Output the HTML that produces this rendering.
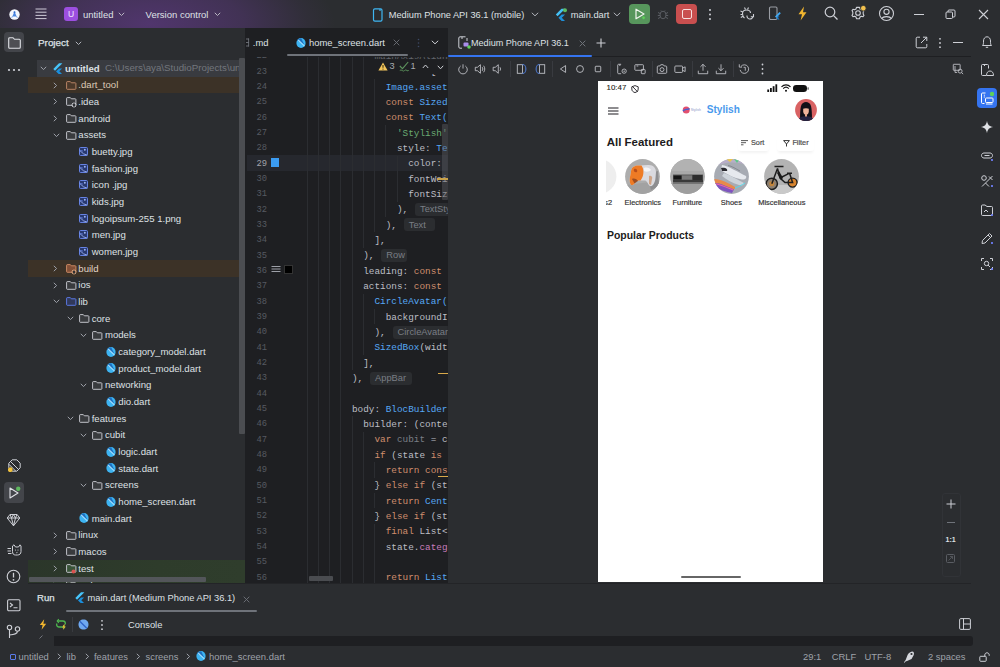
<!DOCTYPE html><html><head><meta charset="utf-8"><style>
html,body{margin:0;padding:0;}
body{width:1000px;height:667px;overflow:hidden;position:relative;background:#2B2D30;font-family:"Liberation Sans",sans-serif;}
div,svg{box-sizing:border-box;}
</style></head><body>
<div style="position:absolute;left:0px;top:0px;width:1000px;height:28px;background:#2B2D30;"></div>
<div style="position:absolute;left:0px;top:0px;width:600px;height:28px;background:radial-gradient(ellipse 185px 80px at 150px 24px, rgba(118,62,170,0.50), rgba(118,62,170,0.30) 50%, rgba(118,62,170,0.07) 85%, rgba(118,62,170,0) 100%);"></div>
<svg style="position:absolute;left:8.5px;top:8.5px;" width="11" height="11" viewBox="0 0 11 11" fill="none"><circle cx="5.5" cy="5.5" r="5.2" fill="#F4F7FC"/><path d="M5.5 2.3 L7.6 7.4 H3.4 Z" fill="#4A86E0"/><circle cx="5.5" cy="3.2" r="1" fill="#2F6BD0"/><path d="M3.4 7.4 L2.8 8.6 M7.6 7.4 L8.2 8.6" stroke="#4A86E0" stroke-width="0.9"/></svg>
<svg style="position:absolute;left:35px;top:8px;" width="12" height="12" viewBox="0 0 12 12" fill="none"><path d="M0.5 1 H11.5 M0.5 4.2 H11.5 M0.5 7.4 H11.5 M0.5 10.6 H11.5" stroke="#CFCBD8" stroke-width="1"/></svg>
<div style="position:absolute;left:64px;top:7px;width:14px;height:13.5px;background:#9C4FE0;border-radius:3px;"></div>
<div style="position:absolute;left:64px;top:8.70px;height:10.20px;line-height:10.20px;font-size:8.5px;color:#F2E6FF;font-weight:normal;font-family:'Liberation Sans', sans-serif;white-space:pre;width:14px;text-align:center;">U</div>
<div style="position:absolute;left:83px;top:9.03px;height:11.34px;line-height:11.34px;font-size:9.45px;color:#DFE1E5;font-weight:normal;font-family:'Liberation Sans', sans-serif;white-space:pre;">untitled</div>
<svg style="position:absolute;left:118.3px;top:12px;" width="7" height="5" viewBox="0 0 7 5" fill="none"><path d="M0.8 0.8 L3.5 3.5 L6.2 0.8" stroke="#B9B6C2" stroke-width="1"/></svg>
<div style="position:absolute;left:145.6px;top:9.00px;height:11.40px;line-height:11.40px;font-size:9.5px;color:#DFE1E5;font-weight:normal;font-family:'Liberation Sans', sans-serif;white-space:pre;">Version control</div>
<svg style="position:absolute;left:213.5px;top:12px;" width="7" height="5" viewBox="0 0 7 5" fill="none"><path d="M0.8 0.8 L3.5 3.5 L6.2 0.8" stroke="#B9B6C2" stroke-width="1"/></svg>
<svg style="position:absolute;left:372px;top:8px;" width="12" height="14" viewBox="0 0 12 14" fill="none"><rect x="1.5" y="0.8" width="8.5" height="12.4" rx="1.4" stroke="#3FB6F2" stroke-width="1.2"/><path d="M8 1 V3" stroke="#3FB6F2" stroke-width="1.2"/></svg>
<div style="position:absolute;left:388.8px;top:9.86px;height:11.09px;line-height:11.09px;font-size:9.24px;color:#DFE1E5;font-weight:normal;font-family:'Liberation Sans', sans-serif;white-space:pre;">Medium Phone API 36.1 (mobile)</div>
<svg style="position:absolute;left:531px;top:12px;" width="8" height="5" viewBox="0 0 8 5" fill="none"><path d="M0.8 0.8 L4 3.8 L7.2 0.8" stroke="#B0B3BA" stroke-width="1"/></svg>
<svg style="position:absolute;left:555px;top:8px;" width="12" height="14" viewBox="0 0 12 14" fill="none"><path d="M6.5 0.8 L0.8 6.5 L2.6 8.3 L10.1 0.8 Z" fill="#44C0F5"/><path d="M6.6 6.6 L3.4 9.8 L6.6 13 L10 13 L6.8 9.8 L10.1 6.6 Z" fill="#1F8FD8"/><circle cx="10" cy="2.2" r="2" fill="#5FB85F"/></svg>
<div style="position:absolute;left:570.7px;top:9.82px;height:11.16px;line-height:11.16px;font-size:9.3px;color:#DFE1E5;font-weight:normal;font-family:'Liberation Sans', sans-serif;white-space:pre;">main.dart</div>
<svg style="position:absolute;left:612.5px;top:12px;" width="8" height="5" viewBox="0 0 8 5" fill="none"><path d="M0.8 0.8 L4 3.8 L7.2 0.8" stroke="#B0B3BA" stroke-width="1"/></svg>
<div style="position:absolute;left:629px;top:4px;width:21px;height:20px;background:#57965C;border-radius:4px;"></div>
<svg style="position:absolute;left:634px;top:8px;" width="12" height="12" viewBox="0 0 12 12" fill="none"><path d="M2 1.2 L10 6 L2 10.8 Z" stroke="#F0F5EE" stroke-width="1.2" stroke-linejoin="round"/><circle cx="9.6" cy="9.8" r="1.7" fill="#5FD15A" stroke="#57965C" stroke-width="0.6"/></svg>
<svg style="position:absolute;left:657px;top:8px;" width="12" height="12" viewBox="0 0 12 12" fill="none"><ellipse cx="6" cy="7" rx="3" ry="3.8" stroke="#5A5D63" stroke-width="1"/><path d="M1 4.5 L3 5.5 M11 4.5 L9 5.5 M0.8 7.5 H3 M11.2 7.5 H9 M1 10.5 L3 9.5 M11 10.5 L9 9.5 M4 2.5 L5 3.5 M8 2.5 L7 3.5" stroke="#5A5D63" stroke-width="1"/></svg>
<div style="position:absolute;left:676px;top:4px;width:21px;height:20px;background:#C94F4F;border-radius:4px;"></div>
<div style="position:absolute;left:681.5px;top:9px;width:10px;height:10px;background:transparent;border:1.2px solid #F7E0E0;border-radius:2px;"></div>
<svg style="position:absolute;left:708px;top:8px;" width="4" height="13" viewBox="0 0 4 13" fill="none"><circle cx="2" cy="2" r="1" fill="#CED0D6"/><circle cx="2" cy="6.5" r="1" fill="#CED0D6"/><circle cx="2" cy="11" r="1" fill="#CED0D6"/></svg>
<svg style="position:absolute;left:740px;top:6px;" width="15" height="15" viewBox="0 0 15 15" fill="none"><path d="M4.5 12 C2.8 11 2.5 9.5 2.5 7.5 C2.5 5 4 4 6.5 4 C9 4 10.5 5 10.5 7" stroke="#CED0D6" stroke-width="1.1"/><path d="M0.5 5 L2.8 6 M0.5 8.5 H2.5 M0.8 11.5 L3 10.3 M4.5 1.5 L5.5 3.5 M8.5 1.5 L7.5 3.5" stroke="#CED0D6" stroke-width="1.1"/><path d="M7 9.5 A3 3 0 1 0 13 10.5 M13.5 8 V10.8 H10.8" stroke="#CED0D6" stroke-width="1.1"/></svg>
<svg style="position:absolute;left:768px;top:6px;" width="13" height="15" viewBox="0 0 13 15" fill="none"><rect x="1.5" y="1" width="7.5" height="12.5" rx="1.2" stroke="#9A9DA4" stroke-width="1.1"/><path d="M11.5 6 L7 10.5 L8.3 11.8 L12.8 7.3 Z" fill="#3FA9F5"/><path d="M9.6 10.5 L8.3 11.8 L9.6 13.5 H11.6 L10 11.8 L11.6 10.3 Z" fill="#1C7FD0"/></svg>
<svg style="position:absolute;left:797px;top:6px;" width="11" height="15" viewBox="0 0 11 15" fill="none"><path d="M7 0.5 L1.5 8.2 H5 L3.6 14.5 L9.5 6.3 H6 Z" fill="#F2B62F"/></svg>
<svg style="position:absolute;left:824px;top:6px;" width="15" height="15" viewBox="0 0 15 15" fill="none"><circle cx="6" cy="6" r="4.8" stroke="#CED0D6" stroke-width="1.2"/><path d="M9.6 9.6 L13.5 13.5" stroke="#CED0D6" stroke-width="1.3"/></svg>
<svg style="position:absolute;left:850px;top:5px;" width="17" height="17" viewBox="0 0 17 17" fill="none"><path d="M8 2.2 L9.5 2.4 L10 4 L11.4 4.8 L13 4.3 L14 5.6 L13.2 7.1 L13.2 8.9 L14 10.4 L13 11.7 L11.4 11.2 L10 12 L9.5 13.6 L8 13.8 L6.5 13.6 L6 12 L4.6 11.2 L3 11.7 L2 10.4 L2.8 8.9 L2.8 7.1 L2 5.6 L3 4.3 L4.6 4.8 L6 4 L6.5 2.4 Z" stroke="#CED0D6" stroke-width="1.1" stroke-linejoin="round"/><circle cx="8" cy="8" r="2.3" stroke="#CED0D6" stroke-width="1.1"/><circle cx="13.3" cy="3.2" r="2.8" fill="#F2C14E" stroke="#2B2D30" stroke-width="0.8"/></svg>
<svg style="position:absolute;left:878px;top:5px;" width="17" height="17" viewBox="0 0 17 17" fill="none"><circle cx="8.5" cy="8.5" r="7" stroke="#CED0D6" stroke-width="1.1"/><circle cx="8.5" cy="6.8" r="2.6" stroke="#CED0D6" stroke-width="1.1"/><path d="M4 13.5 C5 11 12 11 13 13.5" stroke="#CED0D6" stroke-width="1.1"/></svg>
<div style="position:absolute;left:913.5px;top:13.5px;width:10px;height:1.1px;background:#CED0D6;"></div>
<svg style="position:absolute;left:945px;top:9px;" width="11" height="11" viewBox="0 0 11 11" fill="none"><rect x="1" y="3" width="6.5" height="6.5" rx="1" stroke="#CED0D6" stroke-width="1"/><path d="M3 3 V2 C3 1.4 3.4 1 4 1 H9 C9.6 1 10 1.4 10 2 V7 C10 7.6 9.6 8 9 8 H7.5" stroke="#CED0D6" stroke-width="1"/></svg>
<svg style="position:absolute;left:978px;top:9px;" width="11" height="11" viewBox="0 0 11 11" fill="none"><path d="M1 1 L10 10 M10 1 L1 10" stroke="#CED0D6" stroke-width="1.1"/></svg>
<div style="position:absolute;left:4px;top:32px;width:20px;height:20px;background:#43454A;border-radius:4px;"></div>
<svg style="position:absolute;left:7.5px;top:36.5px;" width="13" height="12" viewBox="0 0 13 12" fill="none"><path d="M0.7 1.7 C0.7 1.1 1.1 0.7 1.7 0.7 H5 L6.5 2.3 H11.3 C11.9 2.3 12.3 2.7 12.3 3.3 V10.3 C12.3 10.9 11.9 11.3 11.3 11.3 H1.7 C1.1 11.3 0.7 10.9 0.7 10.3 Z" stroke="#DFE1E5" stroke-width="1.1" fill="rgba(255,255,255,0.06)"/></svg>
<svg style="position:absolute;left:7px;top:68px;" width="14" height="4" viewBox="0 0 14 4" fill="none"><circle cx="2" cy="2" r="1.1" fill="#CED0D6"/><circle cx="7" cy="2" r="1.1" fill="#CED0D6"/><circle cx="12" cy="2" r="1.1" fill="#CED0D6"/></svg>
<svg style="position:absolute;left:7.5px;top:459.3px;" width="13" height="13" viewBox="0 0 13 13" fill="none"><path d="M4.2 0.8 H8.8 L12.2 4.2 V8.8 L8.8 12.2 H4.2 L0.8 8.8 V4.2 Z" stroke="#CED0D6" stroke-width="1"/><path d="M2.6 2.6 L10.6 10.6 M0.9 5.3 L7.7 12.1" stroke="#CED0D6" stroke-width="1"/><circle cx="2.3" cy="10.7" r="2.4" fill="#F0C13E"/></svg>
<div style="position:absolute;left:3.6px;top:482.4px;width:20.5px;height:21px;background:#43454A;border-radius:4px;"></div>
<svg style="position:absolute;left:7px;top:486px;" width="14" height="14" viewBox="0 0 14 14" fill="none"><path d="M3 2 L11 7 L3 12 Z" stroke="#DFE1E5" stroke-width="1.1" stroke-linejoin="round"/><circle cx="11.2" cy="2.8" r="2.2" fill="#5FB85F"/></svg>
<svg style="position:absolute;left:6px;top:513px;" width="15" height="14" viewBox="0 0 15 14" fill="none"><path d="M1.2 5 L4 1.5 H11 L13.8 5 L7.5 12.8 Z M1.2 5 H13.8 M4 1.5 L5.5 5 L7.5 12.8 L9.5 5 L11 1.5 M5.5 5 L7.5 1.5 L9.5 5" stroke="#CED0D6" stroke-width="1" stroke-linejoin="round"/></svg>
<svg style="position:absolute;left:6.5px;top:543.5px;" width="15" height="12" viewBox="0 0 15 12" fill="none"><path d="M5.5 2 L7 0.8 L8.5 3 H11.5 L13 0.8 L14 2 V7.5 C14 9.8 12.5 11 10.5 11 H8.5 C6.5 11 5.5 9.8 5.5 7.5 Z" stroke="#CED0D6" stroke-width="1"/><path d="M0.5 4.5 H4 M0.5 7 H4 M1 9.5 H4.5" stroke="#CED0D6" stroke-width="1"/><circle cx="8.5" cy="6" r="0.6" fill="#CED0D6"/><circle cx="11" cy="6" r="0.6" fill="#CED0D6"/><path d="M9 8.3 L9.8 8.8 L10.6 8.3" stroke="#CED0D6" stroke-width="0.7"/></svg>
<svg style="position:absolute;left:6px;top:569px;" width="15" height="15" viewBox="0 0 15 15" fill="none"><circle cx="7.5" cy="7.5" r="6.3" stroke="#CED0D6" stroke-width="1.1"/><path d="M7.5 3.8 V8.5" stroke="#CED0D6" stroke-width="1.3"/><circle cx="7.5" cy="10.8" r="0.9" fill="#CED0D6"/></svg>
<svg style="position:absolute;left:7px;top:598.5px;" width="14" height="13" viewBox="0 0 14 13" fill="none"><rect x="0.6" y="0.8" width="12.4" height="11" rx="1.2" stroke="#CED0D6" stroke-width="1.1"/><path d="M3 4 L5.5 6 L3 8 M6.5 8.8 H10.5" stroke="#CED0D6" stroke-width="1.1"/></svg>
<svg style="position:absolute;left:6px;top:624px;" width="15" height="15" viewBox="0 0 15 15" fill="none"><circle cx="3.5" cy="3.5" r="2.2" stroke="#CED0D6" stroke-width="1.1"/><circle cx="11.5" cy="5" r="2.2" stroke="#CED0D6" stroke-width="1.1"/><path d="M3.5 5.7 V14 M11.5 7.2 C11.5 10 8 10.5 3.5 11" stroke="#CED0D6" stroke-width="1.1"/></svg>
<div style="position:absolute;left:38px;top:37.06px;height:11.88px;line-height:11.88px;font-size:9.9px;color:#DFE1E5;font-weight:normal;font-family:'Liberation Sans', sans-serif;white-space:pre;-webkit-text-stroke:0.25px #DFE1E5;">Project</div>
<svg style="position:absolute;left:74.5px;top:40.5px;" width="7" height="5" viewBox="0 0 7 5" fill="none"><path d="M0.8 0.8 L3.5 3.5 L6.2 0.8" stroke="#B0B3BA" stroke-width="1"/></svg>
<div style="position:absolute;left:37px;top:60.0px;width:208px;height:16.6667px;background:#393B40;"></div>
<div style="position:absolute;left:28px;top:76.66669999999999px;width:217px;height:16.6667px;background:#3C3227;"></div>
<div style="position:absolute;left:28px;top:260.0004px;width:217px;height:16.6667px;background:#3C3227;"></div>
<div style="position:absolute;left:28px;top:560.001px;width:217px;height:22.999000000000024px;background:linear-gradient(90deg,#2B362A,#2E3C2B 60%,#2F3D2C);"></div>
<svg style="position:absolute;left:40.0px;top:65.83335px;" width="7" height="5" viewBox="0 0 7 5" fill="none"><path d="M0.8 0.8 L3.5 3.6 L6.2 0.8" stroke="#9DA0A8" stroke-width="1"/></svg>
<svg style="position:absolute;left:52.5px;top:62.833349999999996px;" width="10" height="11" viewBox="0 0 10 11" fill="none"><path d="M6 0.3 L0.3 6 L2 7.7 L9.4 0.3 Z" fill="#47C5FB"/><path d="M6 5.6 L3 8.6 L5.7 11 H9 L6.3 8.3 L9.1 5.6 Z" fill="#1A8FDD"/></svg>
<div style="position:absolute;left:65.0px;top:62.59px;height:11.50px;line-height:11.50px;font-size:9.58px;color:#DFE1E5;font-weight:bold;font-family:'Liberation Sans', sans-serif;white-space:pre;">untitled</div>
<div style="position:absolute;left:105px;top:62.48px;height:11.70px;line-height:11.70px;font-size:9.75px;color:#73767D;font-weight:normal;font-family:'Liberation Sans', sans-serif;white-space:pre;">C:\Users\aya\StudioProjects\untitled</div>
<svg style="position:absolute;left:53.333px;top:81.50004999999999px;" width="5" height="7" viewBox="0 0 5 7" fill="none"><path d="M0.8 0.8 L3.6 3.5 L0.8 6.2" stroke="#9DA0A8" stroke-width="1"/></svg>
<svg style="position:absolute;left:65.833px;top:80.50004999999999px;" width="11" height="9" viewBox="0 0 11 9" fill="none"><path d="M0.6 1.2 C0.6 0.9 0.9 0.6 1.2 0.6 H4.3 L5.3 1.8 H9.3 C9.6 1.8 9.9 2.1 9.9 2.4 V7.7 C9.9 8 9.6 8.3 9.3 8.3 H1.2 C0.9 8.3 0.6 8 0.6 7.7 Z" stroke="#B98465" fill="rgba(120,80,50,0.25)" stroke-width="1"/></svg>
<div style="position:absolute;left:78.333px;top:79.25px;height:11.51px;line-height:11.51px;font-size:9.59px;color:#DCCBB8;font-weight:normal;font-family:'Liberation Sans', sans-serif;white-space:pre;">.dart_tool</div>
<svg style="position:absolute;left:53.333px;top:98.16675px;" width="5" height="7" viewBox="0 0 5 7" fill="none"><path d="M0.8 0.8 L3.6 3.5 L0.8 6.2" stroke="#9DA0A8" stroke-width="1"/></svg>
<svg style="position:absolute;left:65.833px;top:97.16675px;" width="11" height="9" viewBox="0 0 11 9" fill="none"><path d="M0.6 1.2 C0.6 0.9 0.9 0.6 1.2 0.6 H4.3 L5.3 1.8 H9.3 C9.6 1.8 9.9 2.1 9.9 2.4 V7.7 C9.9 8 9.6 8.3 9.3 8.3 H1.2 C0.9 8.3 0.6 8 0.6 7.7 Z" stroke="#C0C2C8" fill="rgba(255,255,255,0.07)" stroke-width="1"/></svg>
<svg style="position:absolute;left:71.333px;top:102.46674999999999px;" width="6" height="6" viewBox="0 0 6 6" fill="none"><path d="M3 0.3 V5.7 M0.3 3 H5.7 M1.1 1.1 L4.9 4.9 M4.9 1.1 L1.1 4.9" stroke="#D8DAE0" stroke-width="0.9"/><circle cx="3" cy="3" r="1.2" fill="#2B2D30"/></svg>
<div style="position:absolute;left:78.333px;top:95.91px;height:11.51px;line-height:11.51px;font-size:9.59px;color:#DFE1E5;font-weight:normal;font-family:'Liberation Sans', sans-serif;white-space:pre;">.idea</div>
<svg style="position:absolute;left:53.333px;top:114.83345px;" width="5" height="7" viewBox="0 0 5 7" fill="none"><path d="M0.8 0.8 L3.6 3.5 L0.8 6.2" stroke="#9DA0A8" stroke-width="1"/></svg>
<svg style="position:absolute;left:65.833px;top:113.83345px;" width="11" height="9" viewBox="0 0 11 9" fill="none"><path d="M0.6 1.2 C0.6 0.9 0.9 0.6 1.2 0.6 H4.3 L5.3 1.8 H9.3 C9.6 1.8 9.9 2.1 9.9 2.4 V7.7 C9.9 8 9.6 8.3 9.3 8.3 H1.2 C0.9 8.3 0.6 8 0.6 7.7 Z" stroke="#C0C2C8" fill="rgba(255,255,255,0.07)" stroke-width="1"/></svg>
<div style="position:absolute;left:78.333px;top:112.58px;height:11.51px;line-height:11.51px;font-size:9.59px;color:#DFE1E5;font-weight:normal;font-family:'Liberation Sans', sans-serif;white-space:pre;">android</div>
<svg style="position:absolute;left:53.333px;top:132.50015px;" width="7" height="5" viewBox="0 0 7 5" fill="none"><path d="M0.8 0.8 L3.5 3.6 L6.2 0.8" stroke="#9DA0A8" stroke-width="1"/></svg>
<svg style="position:absolute;left:65.833px;top:130.50015px;" width="11" height="9" viewBox="0 0 11 9" fill="none"><path d="M0.6 1.2 C0.6 0.9 0.9 0.6 1.2 0.6 H4.3 L5.3 1.8 H9.3 C9.6 1.8 9.9 2.1 9.9 2.4 V7.7 C9.9 8 9.6 8.3 9.3 8.3 H1.2 C0.9 8.3 0.6 8 0.6 7.7 Z" stroke="#C0C2C8" fill="rgba(255,255,255,0.07)" stroke-width="1"/></svg>
<div style="position:absolute;left:78.333px;top:129.25px;height:11.51px;line-height:11.51px;font-size:9.59px;color:#DFE1E5;font-weight:normal;font-family:'Liberation Sans', sans-serif;white-space:pre;">assets</div>
<svg style="position:absolute;left:78.866px;top:147.06685px;" width="9" height="9" viewBox="0 0 10 10" fill="none"><rect x="0.6" y="0.6" width="8.8" height="8.8" rx="1" fill="#28386E" stroke="#6A88EC" stroke-width="1.1"/><path d="M0.8 3.8 L5 7.6 L9.2 9" stroke="#9DB3F2" stroke-width="1"/><path d="M1 4.6 C2.5 3.6 3.6 4 4.6 5" stroke="#6A88EC" stroke-width="0.9"/><circle cx="6.5" cy="3" r="1.1" fill="#9DB3F2"/></svg>
<div style="position:absolute;left:91.666px;top:145.91px;height:11.51px;line-height:11.51px;font-size:9.59px;color:#DFE1E5;font-weight:normal;font-family:'Liberation Sans', sans-serif;white-space:pre;">buetty.jpg</div>
<svg style="position:absolute;left:78.866px;top:163.73355px;" width="9" height="9" viewBox="0 0 10 10" fill="none"><rect x="0.6" y="0.6" width="8.8" height="8.8" rx="1" fill="#28386E" stroke="#6A88EC" stroke-width="1.1"/><path d="M0.8 3.8 L5 7.6 L9.2 9" stroke="#9DB3F2" stroke-width="1"/><path d="M1 4.6 C2.5 3.6 3.6 4 4.6 5" stroke="#6A88EC" stroke-width="0.9"/><circle cx="6.5" cy="3" r="1.1" fill="#9DB3F2"/></svg>
<div style="position:absolute;left:91.666px;top:162.58px;height:11.51px;line-height:11.51px;font-size:9.59px;color:#DFE1E5;font-weight:normal;font-family:'Liberation Sans', sans-serif;white-space:pre;">fashion.jpg</div>
<svg style="position:absolute;left:78.866px;top:180.40025px;" width="9" height="9" viewBox="0 0 10 10" fill="none"><rect x="0.6" y="0.6" width="8.8" height="8.8" rx="1" fill="#28386E" stroke="#6A88EC" stroke-width="1.1"/><path d="M0.8 3.8 L5 7.6 L9.2 9" stroke="#9DB3F2" stroke-width="1"/><path d="M1 4.6 C2.5 3.6 3.6 4 4.6 5" stroke="#6A88EC" stroke-width="0.9"/><circle cx="6.5" cy="3" r="1.1" fill="#9DB3F2"/></svg>
<div style="position:absolute;left:91.666px;top:179.25px;height:11.51px;line-height:11.51px;font-size:9.59px;color:#DFE1E5;font-weight:normal;font-family:'Liberation Sans', sans-serif;white-space:pre;">icon .jpg</div>
<svg style="position:absolute;left:78.866px;top:197.06695px;" width="9" height="9" viewBox="0 0 10 10" fill="none"><rect x="0.6" y="0.6" width="8.8" height="8.8" rx="1" fill="#28386E" stroke="#6A88EC" stroke-width="1.1"/><path d="M0.8 3.8 L5 7.6 L9.2 9" stroke="#9DB3F2" stroke-width="1"/><path d="M1 4.6 C2.5 3.6 3.6 4 4.6 5" stroke="#6A88EC" stroke-width="0.9"/><circle cx="6.5" cy="3" r="1.1" fill="#9DB3F2"/></svg>
<div style="position:absolute;left:91.666px;top:195.91px;height:11.51px;line-height:11.51px;font-size:9.59px;color:#DFE1E5;font-weight:normal;font-family:'Liberation Sans', sans-serif;white-space:pre;">kids.jpg</div>
<svg style="position:absolute;left:78.866px;top:213.73364999999998px;" width="9" height="9" viewBox="0 0 10 10" fill="none"><rect x="0.6" y="0.6" width="8.8" height="8.8" rx="1" fill="#28386E" stroke="#6A88EC" stroke-width="1.1"/><path d="M0.8 3.8 L5 7.6 L9.2 9" stroke="#9DB3F2" stroke-width="1"/><path d="M1 4.6 C2.5 3.6 3.6 4 4.6 5" stroke="#6A88EC" stroke-width="0.9"/><circle cx="6.5" cy="3" r="1.1" fill="#9DB3F2"/></svg>
<div style="position:absolute;left:91.666px;top:212.58px;height:11.51px;line-height:11.51px;font-size:9.59px;color:#DFE1E5;font-weight:normal;font-family:'Liberation Sans', sans-serif;white-space:pre;">logoipsum-255 1.png</div>
<svg style="position:absolute;left:78.866px;top:230.40034999999997px;" width="9" height="9" viewBox="0 0 10 10" fill="none"><rect x="0.6" y="0.6" width="8.8" height="8.8" rx="1" fill="#28386E" stroke="#6A88EC" stroke-width="1.1"/><path d="M0.8 3.8 L5 7.6 L9.2 9" stroke="#9DB3F2" stroke-width="1"/><path d="M1 4.6 C2.5 3.6 3.6 4 4.6 5" stroke="#6A88EC" stroke-width="0.9"/><circle cx="6.5" cy="3" r="1.1" fill="#9DB3F2"/></svg>
<div style="position:absolute;left:91.666px;top:229.25px;height:11.51px;line-height:11.51px;font-size:9.59px;color:#DFE1E5;font-weight:normal;font-family:'Liberation Sans', sans-serif;white-space:pre;">men.jpg</div>
<svg style="position:absolute;left:78.866px;top:247.06705px;" width="9" height="9" viewBox="0 0 10 10" fill="none"><rect x="0.6" y="0.6" width="8.8" height="8.8" rx="1" fill="#28386E" stroke="#6A88EC" stroke-width="1.1"/><path d="M0.8 3.8 L5 7.6 L9.2 9" stroke="#9DB3F2" stroke-width="1"/><path d="M1 4.6 C2.5 3.6 3.6 4 4.6 5" stroke="#6A88EC" stroke-width="0.9"/><circle cx="6.5" cy="3" r="1.1" fill="#9DB3F2"/></svg>
<div style="position:absolute;left:91.666px;top:245.91px;height:11.51px;line-height:11.51px;font-size:9.59px;color:#DFE1E5;font-weight:normal;font-family:'Liberation Sans', sans-serif;white-space:pre;">women.jpg</div>
<svg style="position:absolute;left:53.333px;top:264.83375px;" width="5" height="7" viewBox="0 0 5 7" fill="none"><path d="M0.8 0.8 L3.6 3.5 L0.8 6.2" stroke="#9DA0A8" stroke-width="1"/></svg>
<svg style="position:absolute;left:65.833px;top:263.83375px;" width="11" height="9" viewBox="0 0 11 9" fill="none"><path d="M0.6 1.2 C0.6 0.9 0.9 0.6 1.2 0.6 H4.3 L5.3 1.8 H9.3 C9.6 1.8 9.9 2.1 9.9 2.4 V7.7 C9.9 8 9.6 8.3 9.3 8.3 H1.2 C0.9 8.3 0.6 8 0.6 7.7 Z" stroke="#C98863" fill="rgba(190,105,70,0.55)" stroke-width="1"/></svg>
<svg style="position:absolute;left:71.333px;top:269.13375px;" width="6" height="6" viewBox="0 0 6 6" fill="none"><path d="M3 0.3 V5.7 M0.3 3 H5.7 M1.1 1.1 L4.9 4.9 M4.9 1.1 L1.1 4.9" stroke="#E0B08A" stroke-width="0.9"/><circle cx="3" cy="3" r="1.2" fill="#2B2D30"/></svg>
<div style="position:absolute;left:78.333px;top:262.58px;height:11.51px;line-height:11.51px;font-size:9.59px;color:#E2D6C8;font-weight:normal;font-family:'Liberation Sans', sans-serif;white-space:pre;">build</div>
<svg style="position:absolute;left:53.333px;top:281.50045px;" width="5" height="7" viewBox="0 0 5 7" fill="none"><path d="M0.8 0.8 L3.6 3.5 L0.8 6.2" stroke="#9DA0A8" stroke-width="1"/></svg>
<svg style="position:absolute;left:65.833px;top:280.50045px;" width="11" height="9" viewBox="0 0 11 9" fill="none"><path d="M0.6 1.2 C0.6 0.9 0.9 0.6 1.2 0.6 H4.3 L5.3 1.8 H9.3 C9.6 1.8 9.9 2.1 9.9 2.4 V7.7 C9.9 8 9.6 8.3 9.3 8.3 H1.2 C0.9 8.3 0.6 8 0.6 7.7 Z" stroke="#C0C2C8" fill="rgba(255,255,255,0.07)" stroke-width="1"/></svg>
<div style="position:absolute;left:78.333px;top:279.25px;height:11.51px;line-height:11.51px;font-size:9.59px;color:#DFE1E5;font-weight:normal;font-family:'Liberation Sans', sans-serif;white-space:pre;">ios</div>
<svg style="position:absolute;left:53.333px;top:299.16715px;" width="7" height="5" viewBox="0 0 7 5" fill="none"><path d="M0.8 0.8 L3.5 3.6 L6.2 0.8" stroke="#9DA0A8" stroke-width="1"/></svg>
<svg style="position:absolute;left:65.833px;top:297.16715px;" width="11" height="9" viewBox="0 0 11 9" fill="none"><path d="M0.6 1.2 C0.6 0.9 0.9 0.6 1.2 0.6 H4.3 L5.3 1.8 H9.3 C9.6 1.8 9.9 2.1 9.9 2.4 V7.7 C9.9 8 9.6 8.3 9.3 8.3 H1.2 C0.9 8.3 0.6 8 0.6 7.7 Z" stroke="#5B78E0" fill="rgba(60,80,170,0.35)" stroke-width="1"/></svg>
<div style="position:absolute;left:78.333px;top:295.91px;height:11.51px;line-height:11.51px;font-size:9.59px;color:#DFE1E5;font-weight:normal;font-family:'Liberation Sans', sans-serif;white-space:pre;">lib</div>
<svg style="position:absolute;left:66.666px;top:315.83385px;" width="7" height="5" viewBox="0 0 7 5" fill="none"><path d="M0.8 0.8 L3.5 3.6 L6.2 0.8" stroke="#9DA0A8" stroke-width="1"/></svg>
<svg style="position:absolute;left:79.166px;top:313.83385px;" width="11" height="9" viewBox="0 0 11 9" fill="none"><path d="M0.6 1.2 C0.6 0.9 0.9 0.6 1.2 0.6 H4.3 L5.3 1.8 H9.3 C9.6 1.8 9.9 2.1 9.9 2.4 V7.7 C9.9 8 9.6 8.3 9.3 8.3 H1.2 C0.9 8.3 0.6 8 0.6 7.7 Z" stroke="#C0C2C8" fill="rgba(255,255,255,0.07)" stroke-width="1"/></svg>
<div style="position:absolute;left:91.666px;top:312.58px;height:11.51px;line-height:11.51px;font-size:9.59px;color:#DFE1E5;font-weight:normal;font-family:'Liberation Sans', sans-serif;white-space:pre;">core</div>
<svg style="position:absolute;left:79.999px;top:332.50055px;" width="7" height="5" viewBox="0 0 7 5" fill="none"><path d="M0.8 0.8 L3.5 3.6 L6.2 0.8" stroke="#9DA0A8" stroke-width="1"/></svg>
<svg style="position:absolute;left:92.499px;top:330.50055px;" width="11" height="9" viewBox="0 0 11 9" fill="none"><path d="M0.6 1.2 C0.6 0.9 0.9 0.6 1.2 0.6 H4.3 L5.3 1.8 H9.3 C9.6 1.8 9.9 2.1 9.9 2.4 V7.7 C9.9 8 9.6 8.3 9.3 8.3 H1.2 C0.9 8.3 0.6 8 0.6 7.7 Z" stroke="#C0C2C8" fill="rgba(255,255,255,0.07)" stroke-width="1"/></svg>
<div style="position:absolute;left:104.999px;top:329.25px;height:11.51px;line-height:11.51px;font-size:9.59px;color:#DFE1E5;font-weight:normal;font-family:'Liberation Sans', sans-serif;white-space:pre;">models</div>
<svg style="position:absolute;left:105.832px;top:346.66724999999997px;" width="10" height="10" viewBox="0 0 10 10" fill="none"><ellipse cx="5" cy="5" rx="4.6" ry="4.9" fill="#3DB4F2"/><path d="M1.2 2.5 C2 1 3.5 0.3 5.2 0.2 L8.2 6.5 Z" fill="#1D6FC0"/><path d="M2.2 2 L8.5 8.2" stroke="#A5DDFB" stroke-width="1.1"/></svg>
<div style="position:absolute;left:118.332px;top:345.91px;height:11.51px;line-height:11.51px;font-size:9.59px;color:#DFE1E5;font-weight:normal;font-family:'Liberation Sans', sans-serif;white-space:pre;">category_model.dart</div>
<svg style="position:absolute;left:105.832px;top:363.33394999999996px;" width="10" height="10" viewBox="0 0 10 10" fill="none"><ellipse cx="5" cy="5" rx="4.6" ry="4.9" fill="#3DB4F2"/><path d="M1.2 2.5 C2 1 3.5 0.3 5.2 0.2 L8.2 6.5 Z" fill="#1D6FC0"/><path d="M2.2 2 L8.5 8.2" stroke="#A5DDFB" stroke-width="1.1"/></svg>
<div style="position:absolute;left:118.332px;top:362.58px;height:11.51px;line-height:11.51px;font-size:9.59px;color:#DFE1E5;font-weight:normal;font-family:'Liberation Sans', sans-serif;white-space:pre;">product_model.dart</div>
<svg style="position:absolute;left:79.999px;top:382.50064999999995px;" width="7" height="5" viewBox="0 0 7 5" fill="none"><path d="M0.8 0.8 L3.5 3.6 L6.2 0.8" stroke="#9DA0A8" stroke-width="1"/></svg>
<svg style="position:absolute;left:92.499px;top:380.50064999999995px;" width="11" height="9" viewBox="0 0 11 9" fill="none"><path d="M0.6 1.2 C0.6 0.9 0.9 0.6 1.2 0.6 H4.3 L5.3 1.8 H9.3 C9.6 1.8 9.9 2.1 9.9 2.4 V7.7 C9.9 8 9.6 8.3 9.3 8.3 H1.2 C0.9 8.3 0.6 8 0.6 7.7 Z" stroke="#C0C2C8" fill="rgba(255,255,255,0.07)" stroke-width="1"/></svg>
<div style="position:absolute;left:104.999px;top:379.25px;height:11.51px;line-height:11.51px;font-size:9.59px;color:#DFE1E5;font-weight:normal;font-family:'Liberation Sans', sans-serif;white-space:pre;">networking</div>
<svg style="position:absolute;left:105.832px;top:396.66734999999994px;" width="10" height="10" viewBox="0 0 10 10" fill="none"><ellipse cx="5" cy="5" rx="4.6" ry="4.9" fill="#3DB4F2"/><path d="M1.2 2.5 C2 1 3.5 0.3 5.2 0.2 L8.2 6.5 Z" fill="#1D6FC0"/><path d="M2.2 2 L8.5 8.2" stroke="#A5DDFB" stroke-width="1.1"/></svg>
<div style="position:absolute;left:118.332px;top:395.91px;height:11.51px;line-height:11.51px;font-size:9.59px;color:#DFE1E5;font-weight:normal;font-family:'Liberation Sans', sans-serif;white-space:pre;">dio.dart</div>
<svg style="position:absolute;left:66.666px;top:415.83405px;" width="7" height="5" viewBox="0 0 7 5" fill="none"><path d="M0.8 0.8 L3.5 3.6 L6.2 0.8" stroke="#9DA0A8" stroke-width="1"/></svg>
<svg style="position:absolute;left:79.166px;top:413.83405px;" width="11" height="9" viewBox="0 0 11 9" fill="none"><path d="M0.6 1.2 C0.6 0.9 0.9 0.6 1.2 0.6 H4.3 L5.3 1.8 H9.3 C9.6 1.8 9.9 2.1 9.9 2.4 V7.7 C9.9 8 9.6 8.3 9.3 8.3 H1.2 C0.9 8.3 0.6 8 0.6 7.7 Z" stroke="#C0C2C8" fill="rgba(255,255,255,0.07)" stroke-width="1"/></svg>
<div style="position:absolute;left:91.666px;top:412.58px;height:11.51px;line-height:11.51px;font-size:9.59px;color:#DFE1E5;font-weight:normal;font-family:'Liberation Sans', sans-serif;white-space:pre;">features</div>
<svg style="position:absolute;left:79.999px;top:432.50075px;" width="7" height="5" viewBox="0 0 7 5" fill="none"><path d="M0.8 0.8 L3.5 3.6 L6.2 0.8" stroke="#9DA0A8" stroke-width="1"/></svg>
<svg style="position:absolute;left:92.499px;top:430.50075px;" width="11" height="9" viewBox="0 0 11 9" fill="none"><path d="M0.6 1.2 C0.6 0.9 0.9 0.6 1.2 0.6 H4.3 L5.3 1.8 H9.3 C9.6 1.8 9.9 2.1 9.9 2.4 V7.7 C9.9 8 9.6 8.3 9.3 8.3 H1.2 C0.9 8.3 0.6 8 0.6 7.7 Z" stroke="#C0C2C8" fill="rgba(255,255,255,0.07)" stroke-width="1"/></svg>
<div style="position:absolute;left:104.999px;top:429.25px;height:11.51px;line-height:11.51px;font-size:9.59px;color:#DFE1E5;font-weight:normal;font-family:'Liberation Sans', sans-serif;white-space:pre;">cubit</div>
<svg style="position:absolute;left:105.832px;top:446.66745px;" width="10" height="10" viewBox="0 0 10 10" fill="none"><ellipse cx="5" cy="5" rx="4.6" ry="4.9" fill="#3DB4F2"/><path d="M1.2 2.5 C2 1 3.5 0.3 5.2 0.2 L8.2 6.5 Z" fill="#1D6FC0"/><path d="M2.2 2 L8.5 8.2" stroke="#A5DDFB" stroke-width="1.1"/></svg>
<div style="position:absolute;left:118.332px;top:445.91px;height:11.51px;line-height:11.51px;font-size:9.59px;color:#DFE1E5;font-weight:normal;font-family:'Liberation Sans', sans-serif;white-space:pre;">logic.dart</div>
<svg style="position:absolute;left:105.832px;top:463.33414999999997px;" width="10" height="10" viewBox="0 0 10 10" fill="none"><ellipse cx="5" cy="5" rx="4.6" ry="4.9" fill="#3DB4F2"/><path d="M1.2 2.5 C2 1 3.5 0.3 5.2 0.2 L8.2 6.5 Z" fill="#1D6FC0"/><path d="M2.2 2 L8.5 8.2" stroke="#A5DDFB" stroke-width="1.1"/></svg>
<div style="position:absolute;left:118.332px;top:462.58px;height:11.51px;line-height:11.51px;font-size:9.59px;color:#DFE1E5;font-weight:normal;font-family:'Liberation Sans', sans-serif;white-space:pre;">state.dart</div>
<svg style="position:absolute;left:79.999px;top:482.50084999999996px;" width="7" height="5" viewBox="0 0 7 5" fill="none"><path d="M0.8 0.8 L3.5 3.6 L6.2 0.8" stroke="#9DA0A8" stroke-width="1"/></svg>
<svg style="position:absolute;left:92.499px;top:480.50084999999996px;" width="11" height="9" viewBox="0 0 11 9" fill="none"><path d="M0.6 1.2 C0.6 0.9 0.9 0.6 1.2 0.6 H4.3 L5.3 1.8 H9.3 C9.6 1.8 9.9 2.1 9.9 2.4 V7.7 C9.9 8 9.6 8.3 9.3 8.3 H1.2 C0.9 8.3 0.6 8 0.6 7.7 Z" stroke="#C0C2C8" fill="rgba(255,255,255,0.07)" stroke-width="1"/></svg>
<div style="position:absolute;left:104.999px;top:479.25px;height:11.51px;line-height:11.51px;font-size:9.59px;color:#DFE1E5;font-weight:normal;font-family:'Liberation Sans', sans-serif;white-space:pre;">screens</div>
<svg style="position:absolute;left:105.832px;top:496.66754999999995px;" width="10" height="10" viewBox="0 0 10 10" fill="none"><ellipse cx="5" cy="5" rx="4.6" ry="4.9" fill="#3DB4F2"/><path d="M1.2 2.5 C2 1 3.5 0.3 5.2 0.2 L8.2 6.5 Z" fill="#1D6FC0"/><path d="M2.2 2 L8.5 8.2" stroke="#A5DDFB" stroke-width="1.1"/></svg>
<div style="position:absolute;left:118.332px;top:495.91px;height:11.51px;line-height:11.51px;font-size:9.59px;color:#DFE1E5;font-weight:normal;font-family:'Liberation Sans', sans-serif;white-space:pre;">home_screen.dart</div>
<svg style="position:absolute;left:79.166px;top:513.33425px;" width="10" height="10" viewBox="0 0 10 10" fill="none"><ellipse cx="5" cy="5" rx="4.6" ry="4.9" fill="#3DB4F2"/><path d="M1.2 2.5 C2 1 3.5 0.3 5.2 0.2 L8.2 6.5 Z" fill="#1D6FC0"/><path d="M2.2 2 L8.5 8.2" stroke="#A5DDFB" stroke-width="1.1"/></svg>
<div style="position:absolute;left:91.666px;top:512.58px;height:11.51px;line-height:11.51px;font-size:9.59px;color:#DFE1E5;font-weight:normal;font-family:'Liberation Sans', sans-serif;white-space:pre;">main.dart</div>
<svg style="position:absolute;left:53.333px;top:531.50095px;" width="5" height="7" viewBox="0 0 5 7" fill="none"><path d="M0.8 0.8 L3.6 3.5 L0.8 6.2" stroke="#9DA0A8" stroke-width="1"/></svg>
<svg style="position:absolute;left:65.833px;top:530.50095px;" width="11" height="9" viewBox="0 0 11 9" fill="none"><path d="M0.6 1.2 C0.6 0.9 0.9 0.6 1.2 0.6 H4.3 L5.3 1.8 H9.3 C9.6 1.8 9.9 2.1 9.9 2.4 V7.7 C9.9 8 9.6 8.3 9.3 8.3 H1.2 C0.9 8.3 0.6 8 0.6 7.7 Z" stroke="#C0C2C8" fill="rgba(255,255,255,0.07)" stroke-width="1"/></svg>
<div style="position:absolute;left:78.333px;top:529.25px;height:11.51px;line-height:11.51px;font-size:9.59px;color:#DFE1E5;font-weight:normal;font-family:'Liberation Sans', sans-serif;white-space:pre;">linux</div>
<svg style="position:absolute;left:53.333px;top:548.16765px;" width="5" height="7" viewBox="0 0 5 7" fill="none"><path d="M0.8 0.8 L3.6 3.5 L0.8 6.2" stroke="#9DA0A8" stroke-width="1"/></svg>
<svg style="position:absolute;left:65.833px;top:547.16765px;" width="11" height="9" viewBox="0 0 11 9" fill="none"><path d="M0.6 1.2 C0.6 0.9 0.9 0.6 1.2 0.6 H4.3 L5.3 1.8 H9.3 C9.6 1.8 9.9 2.1 9.9 2.4 V7.7 C9.9 8 9.6 8.3 9.3 8.3 H1.2 C0.9 8.3 0.6 8 0.6 7.7 Z" stroke="#C0C2C8" fill="rgba(255,255,255,0.07)" stroke-width="1"/></svg>
<div style="position:absolute;left:78.333px;top:545.91px;height:11.51px;line-height:11.51px;font-size:9.59px;color:#DFE1E5;font-weight:normal;font-family:'Liberation Sans', sans-serif;white-space:pre;">macos</div>
<svg style="position:absolute;left:53.333px;top:564.83435px;" width="5" height="7" viewBox="0 0 5 7" fill="none"><path d="M0.8 0.8 L3.6 3.5 L0.8 6.2" stroke="#9DA0A8" stroke-width="1"/></svg>
<svg style="position:absolute;left:65.833px;top:563.83435px;" width="11" height="9" viewBox="0 0 11 9" fill="none"><path d="M0.6 1.2 C0.6 0.9 0.9 0.6 1.2 0.6 H4.3 L5.3 1.8 H9.3 C9.6 1.8 9.9 2.1 9.9 2.4 V7.7 C9.9 8 9.6 8.3 9.3 8.3 H1.2 C0.9 8.3 0.6 8 0.6 7.7 Z" stroke="#C0C2C8" fill="rgba(90,150,90,0.3)" stroke-width="1"/></svg>
<svg style="position:absolute;left:70.833px;top:569.33435px;" width="5" height="5" viewBox="0 0 5 5" fill="none"><circle cx="2.5" cy="2.5" r="2" fill="#D9534F"/></svg>
<div style="position:absolute;left:78.333px;top:562.58px;height:11.51px;line-height:11.51px;font-size:9.59px;color:#DFE1E5;font-weight:normal;font-family:'Liberation Sans', sans-serif;white-space:pre;">test</div>
<svg style="position:absolute;left:53.333px;top:581.50105px;" width="5" height="7" viewBox="0 0 5 7" fill="none"><path d="M0.8 0.8 L3.6 3.5 L0.8 6.2" stroke="#9DA0A8" stroke-width="1"/></svg>
<svg style="position:absolute;left:65.833px;top:580.50105px;" width="11" height="9" viewBox="0 0 11 9" fill="none"><path d="M0.6 1.2 C0.6 0.9 0.9 0.6 1.2 0.6 H4.3 L5.3 1.8 H9.3 C9.6 1.8 9.9 2.1 9.9 2.4 V7.7 C9.9 8 9.6 8.3 9.3 8.3 H1.2 C0.9 8.3 0.6 8 0.6 7.7 Z" stroke="#C0C2C8" fill="rgba(255,255,255,0.07)" stroke-width="1"/></svg>
<div style="position:absolute;left:78.333px;top:579.25px;height:11.51px;line-height:11.51px;font-size:9.59px;color:#DFE1E5;font-weight:normal;font-family:'Liberation Sans', sans-serif;white-space:pre;">web</div>
<div style="position:absolute;left:238.5px;top:58px;width:6px;height:376px;background:#4B4D51;border-radius:1px;"></div>
<div style="position:absolute;left:29px;top:577.3px;width:177px;height:5px;background:#53565A;border-radius:1px;"></div>
<div style="position:absolute;left:245px;top:28px;width:203px;height:555px;background:#1E1F22;"></div>
<div style="position:absolute;left:252.8px;top:36.86px;height:11.28px;line-height:11.28px;font-size:9.4px;color:#DFE1E5;font-weight:normal;font-family:'Liberation Sans', sans-serif;white-space:pre;">.md</div>
<svg style="position:absolute;left:245.5px;top:38px;" width="4" height="9" viewBox="0 0 4 9" fill="none"><path d="M0 1 H3 M0 4.5 H3 M0 8 H3 M2.6 0.5 V8.5" stroke="#6F737A" stroke-width="0.9"/></svg>
<svg style="position:absolute;left:296px;top:37.5px;" width="10" height="10" viewBox="0 0 10 10" fill="none"><ellipse cx="5" cy="5" rx="4.6" ry="4.9" fill="#3DB4F2"/><path d="M1.2 2.5 C2 1 3.5 0.3 5.2 0.2 L8.2 6.5 Z" fill="#1D6FC0"/><path d="M2.2 2 L8.5 8.2" stroke="#A5DDFB" stroke-width="1.1"/></svg>
<div style="position:absolute;left:309px;top:36.84px;height:11.32px;line-height:11.32px;font-size:9.43px;color:#DFE1E5;font-weight:normal;font-family:'Liberation Sans', sans-serif;white-space:pre;">home_screen.dart</div>
<svg style="position:absolute;left:393px;top:39px;" width="7" height="7" viewBox="0 0 7 7" fill="none"><path d="M0.7 0.7 L6.3 6.3 M6.3 0.7 L0.7 6.3" stroke="#6F737A" stroke-width="0.9"/></svg>
<svg style="position:absolute;left:417px;top:38px;" width="3" height="10" viewBox="0 0 3 10" fill="none"><circle cx="1.5" cy="1.5" r="0.8" fill="#3E4A66"/><circle cx="1.5" cy="5" r="0.8" fill="#3E4A66"/><circle cx="1.5" cy="8.5" r="0.8" fill="#3E4A66"/></svg>
<svg style="position:absolute;left:431px;top:40px;" width="8" height="5" viewBox="0 0 8 5" fill="none"><path d="M0.8 0.8 L4 3.8 L7.2 0.8" stroke="#CED0D6" stroke-width="1"/></svg>
<div style="position:absolute;left:287px;top:54px;width:121px;height:2.4px;background:#6F737A;border-radius:1px;"></div>
<div style="position:absolute;left:0;top:0;width:448px;height:583px;clip-path:inset(57px 0.2px 0 245px);">
<div style="position:absolute;left:247px;top:155.2985px;width:201px;height:15.833px;background:#26282E;"></div>
<div style="position:absolute;left:306.5px;top:57px;width:1px;height:526px;background:#2B2D31;"></div>
<div style="position:absolute;left:317.75px;top:57px;width:1px;height:526px;background:#2B2D31;"></div>
<div style="position:absolute;left:329.0px;top:57px;width:1px;height:526px;background:#2B2D31;"></div>
<div style="position:absolute;left:340.25px;top:57px;width:1px;height:526px;background:#2B2D31;"></div>
<div style="position:absolute;left:351.5px;top:57px;width:1px;height:313.4605px;background:#2B2D31;"></div>
<div style="position:absolute;left:351.5px;top:416.45950000000005px;width:1px;height:166.54049999999995px;background:#2B2D31;"></div>
<div style="position:absolute;left:362.75px;top:57px;width:1px;height:190.7965px;background:#2B2D31;"></div>
<div style="position:absolute;left:362.75px;top:293.7955px;width:1px;height:61.331999999999994px;background:#2B2D31;"></div>
<div style="position:absolute;left:362.75px;top:431.7925px;width:1px;height:151.20749999999998px;background:#2B2D31;"></div>
<div style="position:absolute;left:374.0px;top:79.1335px;width:1px;height:153.33000000000004px;background:#2B2D31;"></div>
<div style="position:absolute;left:374.0px;top:309.12850000000003px;width:1px;height:15.33299999999997px;background:#2B2D31;"></div>
<div style="position:absolute;left:374.0px;top:462.4585px;width:1px;height:15.33299999999997px;background:#2B2D31;"></div>
<div style="position:absolute;left:374.0px;top:493.1245px;width:1px;height:15.33299999999997px;background:#2B2D31;"></div>
<div style="position:absolute;left:374.0px;top:523.7905px;width:1px;height:59.20950000000005px;background:#2B2D31;"></div>
<div style="position:absolute;left:385.25px;top:125.13250000000001px;width:1px;height:91.998px;background:#2B2D31;"></div>
<div style="position:absolute;left:396.5px;top:155.7985px;width:1px;height:45.999000000000024px;background:#2B2D31;"></div>
<div style="position:absolute;left:250px;top:51.25px;height:10.56px;line-height:10.56px;font-size:8.8px;color:#565A61;font-weight:normal;font-family:'Liberation Mono', monospace;white-space:pre;width:17px;text-align:right;">22</div>
<div style="position:absolute;left:250px;top:66.59px;height:10.56px;line-height:10.56px;font-size:8.8px;color:#565A61;font-weight:normal;font-family:'Liberation Mono', monospace;white-space:pre;width:17px;text-align:right;">23</div>
<div style="position:absolute;left:250px;top:81.92px;height:10.56px;line-height:10.56px;font-size:8.8px;color:#565A61;font-weight:normal;font-family:'Liberation Mono', monospace;white-space:pre;width:17px;text-align:right;">24</div>
<div style="position:absolute;left:250px;top:97.25px;height:10.56px;line-height:10.56px;font-size:8.8px;color:#565A61;font-weight:normal;font-family:'Liberation Mono', monospace;white-space:pre;width:17px;text-align:right;">25</div>
<div style="position:absolute;left:250px;top:112.59px;height:10.56px;line-height:10.56px;font-size:8.8px;color:#565A61;font-weight:normal;font-family:'Liberation Mono', monospace;white-space:pre;width:17px;text-align:right;">26</div>
<div style="position:absolute;left:250px;top:127.92px;height:10.56px;line-height:10.56px;font-size:8.8px;color:#565A61;font-weight:normal;font-family:'Liberation Mono', monospace;white-space:pre;width:17px;text-align:right;">27</div>
<div style="position:absolute;left:250px;top:143.25px;height:10.56px;line-height:10.56px;font-size:8.8px;color:#565A61;font-weight:normal;font-family:'Liberation Mono', monospace;white-space:pre;width:17px;text-align:right;">28</div>
<div style="position:absolute;left:250px;top:158.59px;height:10.56px;line-height:10.56px;font-size:8.8px;color:#A1A3AB;font-weight:normal;font-family:'Liberation Mono', monospace;white-space:pre;width:17px;text-align:right;">29</div>
<div style="position:absolute;left:250px;top:173.92px;height:10.56px;line-height:10.56px;font-size:8.8px;color:#565A61;font-weight:normal;font-family:'Liberation Mono', monospace;white-space:pre;width:17px;text-align:right;">30</div>
<div style="position:absolute;left:250px;top:189.25px;height:10.56px;line-height:10.56px;font-size:8.8px;color:#565A61;font-weight:normal;font-family:'Liberation Mono', monospace;white-space:pre;width:17px;text-align:right;">31</div>
<div style="position:absolute;left:250px;top:204.58px;height:10.56px;line-height:10.56px;font-size:8.8px;color:#565A61;font-weight:normal;font-family:'Liberation Mono', monospace;white-space:pre;width:17px;text-align:right;">32</div>
<div style="position:absolute;left:250px;top:219.92px;height:10.56px;line-height:10.56px;font-size:8.8px;color:#565A61;font-weight:normal;font-family:'Liberation Mono', monospace;white-space:pre;width:17px;text-align:right;">33</div>
<div style="position:absolute;left:250px;top:235.25px;height:10.56px;line-height:10.56px;font-size:8.8px;color:#565A61;font-weight:normal;font-family:'Liberation Mono', monospace;white-space:pre;width:17px;text-align:right;">34</div>
<div style="position:absolute;left:250px;top:250.58px;height:10.56px;line-height:10.56px;font-size:8.8px;color:#565A61;font-weight:normal;font-family:'Liberation Mono', monospace;white-space:pre;width:17px;text-align:right;">35</div>
<div style="position:absolute;left:250px;top:265.92px;height:10.56px;line-height:10.56px;font-size:8.8px;color:#565A61;font-weight:normal;font-family:'Liberation Mono', monospace;white-space:pre;width:17px;text-align:right;">36</div>
<div style="position:absolute;left:250px;top:281.25px;height:10.56px;line-height:10.56px;font-size:8.8px;color:#565A61;font-weight:normal;font-family:'Liberation Mono', monospace;white-space:pre;width:17px;text-align:right;">37</div>
<div style="position:absolute;left:250px;top:296.58px;height:10.56px;line-height:10.56px;font-size:8.8px;color:#565A61;font-weight:normal;font-family:'Liberation Mono', monospace;white-space:pre;width:17px;text-align:right;">38</div>
<div style="position:absolute;left:250px;top:311.92px;height:10.56px;line-height:10.56px;font-size:8.8px;color:#565A61;font-weight:normal;font-family:'Liberation Mono', monospace;white-space:pre;width:17px;text-align:right;">39</div>
<div style="position:absolute;left:250px;top:327.25px;height:10.56px;line-height:10.56px;font-size:8.8px;color:#565A61;font-weight:normal;font-family:'Liberation Mono', monospace;white-space:pre;width:17px;text-align:right;">40</div>
<div style="position:absolute;left:250px;top:342.58px;height:10.56px;line-height:10.56px;font-size:8.8px;color:#565A61;font-weight:normal;font-family:'Liberation Mono', monospace;white-space:pre;width:17px;text-align:right;">41</div>
<div style="position:absolute;left:250px;top:357.91px;height:10.56px;line-height:10.56px;font-size:8.8px;color:#565A61;font-weight:normal;font-family:'Liberation Mono', monospace;white-space:pre;width:17px;text-align:right;">42</div>
<div style="position:absolute;left:250px;top:373.25px;height:10.56px;line-height:10.56px;font-size:8.8px;color:#565A61;font-weight:normal;font-family:'Liberation Mono', monospace;white-space:pre;width:17px;text-align:right;">43</div>
<div style="position:absolute;left:250px;top:388.58px;height:10.56px;line-height:10.56px;font-size:8.8px;color:#565A61;font-weight:normal;font-family:'Liberation Mono', monospace;white-space:pre;width:17px;text-align:right;">44</div>
<div style="position:absolute;left:250px;top:403.91px;height:10.56px;line-height:10.56px;font-size:8.8px;color:#565A61;font-weight:normal;font-family:'Liberation Mono', monospace;white-space:pre;width:17px;text-align:right;">45</div>
<div style="position:absolute;left:250px;top:419.25px;height:10.56px;line-height:10.56px;font-size:8.8px;color:#565A61;font-weight:normal;font-family:'Liberation Mono', monospace;white-space:pre;width:17px;text-align:right;">46</div>
<div style="position:absolute;left:250px;top:434.58px;height:10.56px;line-height:10.56px;font-size:8.8px;color:#565A61;font-weight:normal;font-family:'Liberation Mono', monospace;white-space:pre;width:17px;text-align:right;">47</div>
<div style="position:absolute;left:250px;top:449.91px;height:10.56px;line-height:10.56px;font-size:8.8px;color:#565A61;font-weight:normal;font-family:'Liberation Mono', monospace;white-space:pre;width:17px;text-align:right;">48</div>
<div style="position:absolute;left:250px;top:465.25px;height:10.56px;line-height:10.56px;font-size:8.8px;color:#565A61;font-weight:normal;font-family:'Liberation Mono', monospace;white-space:pre;width:17px;text-align:right;">49</div>
<div style="position:absolute;left:250px;top:480.58px;height:10.56px;line-height:10.56px;font-size:8.8px;color:#565A61;font-weight:normal;font-family:'Liberation Mono', monospace;white-space:pre;width:17px;text-align:right;">50</div>
<div style="position:absolute;left:250px;top:495.91px;height:10.56px;line-height:10.56px;font-size:8.8px;color:#565A61;font-weight:normal;font-family:'Liberation Mono', monospace;white-space:pre;width:17px;text-align:right;">51</div>
<div style="position:absolute;left:250px;top:511.24px;height:10.56px;line-height:10.56px;font-size:8.8px;color:#565A61;font-weight:normal;font-family:'Liberation Mono', monospace;white-space:pre;width:17px;text-align:right;">52</div>
<div style="position:absolute;left:250px;top:526.58px;height:10.56px;line-height:10.56px;font-size:8.8px;color:#565A61;font-weight:normal;font-family:'Liberation Mono', monospace;white-space:pre;width:17px;text-align:right;">53</div>
<div style="position:absolute;left:250px;top:541.91px;height:10.56px;line-height:10.56px;font-size:8.8px;color:#565A61;font-weight:normal;font-family:'Liberation Mono', monospace;white-space:pre;width:17px;text-align:right;">54</div>
<div style="position:absolute;left:250px;top:557.24px;height:10.56px;line-height:10.56px;font-size:8.8px;color:#565A61;font-weight:normal;font-family:'Liberation Mono', monospace;white-space:pre;width:17px;text-align:right;">55</div>
<div style="position:absolute;left:250px;top:572.58px;height:10.56px;line-height:10.56px;font-size:8.8px;color:#565A61;font-weight:normal;font-family:'Liberation Mono', monospace;white-space:pre;width:17px;text-align:right;">56</div>
<div style="position:absolute;left:271px;top:158.4px;width:8.2px;height:8.4px;background:#3B9CF2;"></div>
<svg style="position:absolute;left:271px;top:265px;" width="10" height="8" viewBox="0 0 10 8" fill="none"><path d="M0.5 1.5 H9.5 M0.5 4 H9.5 M0.5 6.5 H9.5" stroke="#9DA0A8" stroke-width="1"/></svg>
<div style="position:absolute;left:284px;top:265px;width:8.5px;height:8.5px;background:#000000;border:0.5px solid #333;"></div>
<div style="position:absolute;left:374.5px;top:50.93px;height:12px;line-height:12px;font-size:9.375px;font-family:'Liberation Mono', monospace;white-space:pre;"><span style="color:#62656B">mainAxisAlignment: </span></div>
<div style="position:absolute;left:374.5px;top:66.27px;height:12px;line-height:12px;font-size:9.375px;font-family:'Liberation Mono', monospace;white-space:pre;"><span style="color:#BCBEC4">children: [</span></div>
<div style="position:absolute;left:385.75px;top:81.60px;height:12px;line-height:12px;font-size:9.375px;font-family:'Liberation Mono', monospace;white-space:pre;"><span style="color:#56A8F5">Image.</span><span style="color:#56A8F5">asset</span></div>
<div style="position:absolute;left:385.75px;top:96.93px;height:12px;line-height:12px;font-size:9.375px;font-family:'Liberation Mono', monospace;white-space:pre;"><span style="color:#CF8E6D">const </span><span style="color:#56A8F5">Sized</span></div>
<div style="position:absolute;left:385.75px;top:112.27px;height:12px;line-height:12px;font-size:9.375px;font-family:'Liberation Mono', monospace;white-space:pre;"><span style="color:#CF8E6D">const </span><span style="color:#56A8F5">Text(</span></div>
<div style="position:absolute;left:397.0px;top:127.60px;height:12px;line-height:12px;font-size:9.375px;font-family:'Liberation Mono', monospace;white-space:pre;"><span style="color:#6AAB73">'Stylish'</span></div>
<div style="position:absolute;left:397.0px;top:142.93px;height:12px;line-height:12px;font-size:9.375px;font-family:'Liberation Mono', monospace;white-space:pre;"><span style="color:#BCBEC4">style: </span><span style="color:#56A8F5">Te</span></div>
<div style="position:absolute;left:408.25px;top:158.27px;height:12px;line-height:12px;font-size:9.375px;font-family:'Liberation Mono', monospace;white-space:pre;"><span style="color:#BCBEC4">color: </span></div>
<div style="position:absolute;left:408.25px;top:173.60px;height:12px;line-height:12px;font-size:9.375px;font-family:'Liberation Mono', monospace;white-space:pre;"><span style="color:#BCBEC4">fontWe</span><span style="color:#BCBEC4">i</span></div>
<div style="position:absolute;left:408.25px;top:188.93px;height:12px;line-height:12px;font-size:9.375px;font-family:'Liberation Mono', monospace;white-space:pre;"><span style="color:#BCBEC4">fontSiz</span></div>
<div style="position:absolute;left:397.0px;top:204.26px;height:12px;line-height:12px;font-size:9.375px;font-family:'Liberation Mono', monospace;white-space:pre;"><span style="color:#BCBEC4">),</span></div>
<div style="position:absolute;left:415.05px;top:202.96px;width:57.7px;height:13px;border-radius:3px;background:#2B2D30;"></div>
<div style="position:absolute;left:420.05px;top:204.18px;height:11.16px;line-height:11.16px;font-size:9.3px;color:#7A7E85;font-weight:normal;font-family:'Liberation Sans', sans-serif;white-space:pre;">TextStyle</div>
<div style="position:absolute;left:385.75px;top:219.60px;height:12px;line-height:12px;font-size:9.375px;font-family:'Liberation Mono', monospace;white-space:pre;"><span style="color:#BCBEC4">),</span></div>
<div style="position:absolute;left:403.80px;top:218.30px;width:31.2px;height:13px;border-radius:3px;background:#2B2D30;"></div>
<div style="position:absolute;left:408.8px;top:219.52px;height:11.16px;line-height:11.16px;font-size:9.3px;color:#7A7E85;font-weight:normal;font-family:'Liberation Sans', sans-serif;white-space:pre;">Text</div>
<div style="position:absolute;left:374.5px;top:234.93px;height:12px;line-height:12px;font-size:9.375px;font-family:'Liberation Mono', monospace;white-space:pre;"><span style="color:#BCBEC4">],</span></div>
<div style="position:absolute;left:363.25px;top:250.26px;height:12px;line-height:12px;font-size:9.375px;font-family:'Liberation Mono', monospace;white-space:pre;"><span style="color:#BCBEC4">),</span></div>
<div style="position:absolute;left:381.30px;top:248.96px;width:25.9px;height:13px;border-radius:3px;background:#2B2D30;"></div>
<div style="position:absolute;left:386.3px;top:250.18px;height:11.16px;line-height:11.16px;font-size:9.3px;color:#7A7E85;font-weight:normal;font-family:'Liberation Sans', sans-serif;white-space:pre;">Row</div>
<div style="position:absolute;left:363.25px;top:265.60px;height:12px;line-height:12px;font-size:9.375px;font-family:'Liberation Mono', monospace;white-space:pre;"><span style="color:#BCBEC4">leading: </span><span style="color:#CF8E6D">const</span></div>
<div style="position:absolute;left:363.25px;top:280.93px;height:12px;line-height:12px;font-size:9.375px;font-family:'Liberation Mono', monospace;white-space:pre;"><span style="color:#BCBEC4">actions: </span><span style="color:#CF8E6D">const</span></div>
<div style="position:absolute;left:374.5px;top:296.26px;height:12px;line-height:12px;font-size:9.375px;font-family:'Liberation Mono', monospace;white-space:pre;"><span style="color:#56A8F5">CircleAvatar(</span></div>
<div style="position:absolute;left:385.75px;top:311.60px;height:12px;line-height:12px;font-size:9.375px;font-family:'Liberation Mono', monospace;white-space:pre;"><span style="color:#BCBEC4">backgroundI</span></div>
<div style="position:absolute;left:374.5px;top:326.93px;height:12px;line-height:12px;font-size:9.375px;font-family:'Liberation Mono', monospace;white-space:pre;"><span style="color:#BCBEC4">),</span></div>
<div style="position:absolute;left:392.55px;top:325.63px;width:73.6px;height:13px;border-radius:3px;background:#2B2D30;"></div>
<div style="position:absolute;left:397.55px;top:326.85px;height:11.16px;line-height:11.16px;font-size:9.3px;color:#7A7E85;font-weight:normal;font-family:'Liberation Sans', sans-serif;white-space:pre;">CircleAvatar</div>
<div style="position:absolute;left:374.5px;top:342.26px;height:12px;line-height:12px;font-size:9.375px;font-family:'Liberation Mono', monospace;white-space:pre;"><span style="color:#56A8F5">SizedBox</span><span style="color:#BCBEC4">(widt</span></div>
<div style="position:absolute;left:363.25px;top:357.59px;height:12px;line-height:12px;font-size:9.375px;font-family:'Liberation Mono', monospace;white-space:pre;"><span style="color:#BCBEC4">],</span></div>
<div style="position:absolute;left:352.0px;top:372.93px;height:12px;line-height:12px;font-size:9.375px;font-family:'Liberation Mono', monospace;white-space:pre;"><span style="color:#BCBEC4">),</span></div>
<div style="position:absolute;left:370.05px;top:371.63px;width:41.8px;height:13px;border-radius:3px;background:#2B2D30;"></div>
<div style="position:absolute;left:375.05px;top:372.85px;height:11.16px;line-height:11.16px;font-size:9.3px;color:#7A7E85;font-weight:normal;font-family:'Liberation Sans', sans-serif;white-space:pre;">AppBar</div>
<div style="position:absolute;left:352.0px;top:403.59px;height:12px;line-height:12px;font-size:9.375px;font-family:'Liberation Mono', monospace;white-space:pre;"><span style="color:#BCBEC4">body: </span><span style="color:#56A8F5">BlocBuilder</span></div>
<div style="position:absolute;left:363.25px;top:418.93px;height:12px;line-height:12px;font-size:9.375px;font-family:'Liberation Mono', monospace;white-space:pre;"><span style="color:#BCBEC4">builder: (conte</span></div>
<div style="position:absolute;left:374.5px;top:434.26px;height:12px;line-height:12px;font-size:9.375px;font-family:'Liberation Mono', monospace;white-space:pre;"><span style="color:#CF8E6D">var </span><span style="color:#7A7E85">cubit</span><span style="color:#BCBEC4"> = c</span></div>
<div style="position:absolute;left:374.5px;top:449.59px;height:12px;line-height:12px;font-size:9.375px;font-family:'Liberation Mono', monospace;white-space:pre;"><span style="color:#CF8E6D">if </span><span style="color:#BCBEC4">(state </span><span style="color:#CF8E6D">is</span></div>
<div style="position:absolute;left:385.75px;top:464.93px;height:12px;line-height:12px;font-size:9.375px;font-family:'Liberation Mono', monospace;white-space:pre;"><span style="color:#CF8E6D">return </span><span style="color:#CF8E6D">cons</span></div>
<div style="position:absolute;left:374.5px;top:480.26px;height:12px;line-height:12px;font-size:9.375px;font-family:'Liberation Mono', monospace;white-space:pre;"><span style="color:#BCBEC4">} </span><span style="color:#CF8E6D">else if </span><span style="color:#BCBEC4">(st</span></div>
<div style="position:absolute;left:385.75px;top:495.59px;height:12px;line-height:12px;font-size:9.375px;font-family:'Liberation Mono', monospace;white-space:pre;"><span style="color:#CF8E6D">return </span><span style="color:#56A8F5">Cent</span></div>
<div style="position:absolute;left:374.5px;top:510.92px;height:12px;line-height:12px;font-size:9.375px;font-family:'Liberation Mono', monospace;white-space:pre;"><span style="color:#BCBEC4">} </span><span style="color:#CF8E6D">else if </span><span style="color:#BCBEC4">(st</span></div>
<div style="position:absolute;left:385.75px;top:526.26px;height:12px;line-height:12px;font-size:9.375px;font-family:'Liberation Mono', monospace;white-space:pre;"><span style="color:#CF8E6D">final </span><span style="color:#BCBEC4">List<</span></div>
<div style="position:absolute;left:385.75px;top:541.59px;height:12px;line-height:12px;font-size:9.375px;font-family:'Liberation Mono', monospace;white-space:pre;"><span style="color:#BCBEC4">state.</span><span style="color:#C77DBB">categ</span></div>
<div style="position:absolute;left:385.75px;top:572.26px;height:12px;line-height:12px;font-size:9.375px;font-family:'Liberation Mono', monospace;white-space:pre;"><span style="color:#CF8E6D">return </span><span style="color:#56A8F5">List</span></div>
<div style="position:absolute;left:385.75px;top:587.59px;height:12px;line-height:12px;font-size:9.375px;font-family:'Liberation Mono', monospace;white-space:pre;"><span style="color:#BCBEC4">itemCount</span></div>
</div>
<div style="position:absolute;left:372px;top:58.5px;width:76px;height:15px;background:#1E1F22;"></div>
<svg style="position:absolute;left:378px;top:61.5px;" width="10" height="9" viewBox="0 0 10 9" fill="none"><path d="M5 0.5 L9.6 8.5 H0.4 Z" fill="#F2C55C"/><path d="M5 3 V5.8" stroke="#3A2E10" stroke-width="1.1"/><circle cx="5" cy="7.1" r="0.55" fill="#3A2E10"/></svg>
<div style="position:absolute;left:389.5px;top:60.98px;height:11.04px;line-height:11.04px;font-size:9.2px;color:#A8ABB0;font-weight:normal;font-family:'Liberation Sans', sans-serif;white-space:pre;">3</div>
<svg style="position:absolute;left:399px;top:61px;" width="10" height="11" viewBox="0 0 10 11" fill="none"><path d="M0.8 5 L3.5 7.6 L9.2 1" stroke="#5E955E" stroke-width="1.1"/><path d="M0.8 9.5 Q2 8.3 3.2 9.5 T5.6 9.5 T8 9.5 T9.6 9" stroke="#5E955E" stroke-width="0.9"/></svg>
<div style="position:absolute;left:410.5px;top:60.98px;height:11.04px;line-height:11.04px;font-size:9.2px;color:#A8ABB0;font-weight:normal;font-family:'Liberation Sans', sans-serif;white-space:pre;">1</div>
<svg style="position:absolute;left:421.5px;top:63.5px;" width="7" height="5" viewBox="0 0 7 5" fill="none"><path d="M0.8 4 L3.5 1 L6.2 4" stroke="#CED0D6" stroke-width="1"/></svg>
<svg style="position:absolute;left:436.5px;top:64.5px;" width="7" height="5" viewBox="0 0 7 5" fill="none"><path d="M0.8 0.8 L3.5 3.8 L6.2 0.8" stroke="#CED0D6" stroke-width="1"/></svg>
<div style="position:absolute;left:441.5px;top:124px;width:6px;height:76px;background:rgba(90,92,98,0.45);border-radius:1px;"></div>
<div style="position:absolute;left:437px;top:178px;width:10.5px;height:1.5px;background:#C9A24A;"></div>
<div style="position:absolute;left:309px;top:576px;width:24px;height:5px;background:#4A4C50;border-radius:1px;"></div>
<div style="position:absolute;left:438px;top:372.5px;width:9.5px;height:1.6px;background:#D9A94A;"></div>
<div style="position:absolute;left:438px;top:475.8px;width:9.5px;height:1.6px;background:#D9A94A;"></div>
<div style="position:absolute;left:448px;top:56px;width:523px;height:1px;background:#1E1F22;"></div>
<svg style="position:absolute;left:458px;top:36px;" width="13" height="13" viewBox="0 0 13 13" fill="none"><path d="M7.5 0.8 H2 C1.3 0.8 0.8 1.3 0.8 2 V11 C0.8 11.7 1.3 12.2 2 12.2 H4" stroke="#CED0D6" stroke-width="1"/><path d="M4 0.8 V3 M9 2 V5" stroke="#CED0D6" stroke-width="1"/><rect x="5.5" y="6.5" width="5" height="4" rx="1" fill="#A98DEB"/><circle cx="11" cy="11" r="1.8" fill="#5FD15A"/></svg>
<div style="position:absolute;left:471px;top:37.95px;height:10.91px;line-height:10.91px;font-size:9.09px;color:#DFE1E5;font-weight:normal;font-family:'Liberation Sans', sans-serif;white-space:pre;">Medium Phone API 36.1</div>
<svg style="position:absolute;left:578.5px;top:39.5px;" width="7" height="7" viewBox="0 0 7 7" fill="none"><path d="M0.7 0.7 L6.3 6.3 M6.3 0.7 L0.7 6.3" stroke="#6F737A" stroke-width="1"/></svg>
<svg style="position:absolute;left:596px;top:38px;" width="10" height="10" viewBox="0 0 10 10" fill="none"><path d="M5 0.5 V9.5 M0.5 5 H9.5" stroke="#CED0D6" stroke-width="1.1"/></svg>
<div style="position:absolute;left:448px;top:54.5px;width:144px;height:2.4px;background:#3574F0;border-radius:1px;"></div>
<svg style="position:absolute;left:915px;top:36px;" width="13" height="13" viewBox="0 0 13 13" fill="none"><path d="M5 1.2 H2.2 C1.6 1.2 1.2 1.6 1.2 2.2 V10.8 C1.2 11.4 1.6 11.8 2.2 11.8 H10.8 C11.4 11.8 11.8 11.4 11.8 10.8 V8" stroke="#CED0D6" stroke-width="1"/><path d="M6 7 L11.8 1.2 M8 1.2 H11.8 V5" stroke="#CED0D6" stroke-width="1"/></svg>
<svg style="position:absolute;left:938px;top:37px;" width="4" height="12" viewBox="0 0 4 12" fill="none"><circle cx="2" cy="1.8" r="0.9" fill="#CED0D6"/><circle cx="2" cy="6" r="0.9" fill="#CED0D6"/><circle cx="2" cy="10.2" r="0.9" fill="#CED0D6"/></svg>
<div style="position:absolute;left:952.5px;top:42px;width:10px;height:1px;background:#CED0D6;"></div>
<svg style="position:absolute;left:456.5px;top:63px;" width="12" height="12" viewBox="0 0 14 14" fill="none"><path d="M4.3 3.5 A5 5 0 1 0 9.7 3.5" stroke="#C4C6CC" stroke-width="1"/><path d="M7 1.5 V6.5" stroke="#C4C6CC" stroke-width="1"/></svg>
<svg style="position:absolute;left:474px;top:63px;" width="12" height="12" viewBox="0 0 14 14" fill="none"><path d="M1.5 5 H4 L7.5 2 V12 L4 9 H1.5 Z" stroke="#C4C6CC" stroke-width="1"/><path d="M9.5 4.8 C10.5 6 10.5 8 9.5 9.2 M11.2 3.2 C13 5.3 13 8.7 11.2 10.8" stroke="#C4C6CC" stroke-width="1"/></svg>
<svg style="position:absolute;left:491px;top:63px;" width="12" height="12" viewBox="0 0 14 14" fill="none"><path d="M2.5 5 H5 L8.5 2 V12 L5 9 H2.5 Z" stroke="#C4C6CC" stroke-width="1"/><path d="M10.5 5 C11.3 6 11.3 8 10.5 9" stroke="#C4C6CC" stroke-width="1"/></svg>
<div style="position:absolute;left:510px;top:61px;width:1px;height:16px;background:#393B40;"></div>
<svg style="position:absolute;left:516px;top:63px;" width="12" height="12" viewBox="0 0 14 14" fill="none"><rect x="1.5" y="2" width="6" height="10" stroke="#C4C6CC" stroke-width="1"/><path d="M7.5 2 H9.5 C11 3.5 11.5 5 11.5 7 C11.5 9 11 10.5 9.5 12 H7.5" stroke="#548AF7" stroke-width="1"/></svg>
<svg style="position:absolute;left:534px;top:63px;" width="12" height="12" viewBox="0 0 14 14" fill="none"><rect x="6.5" y="2" width="6" height="10" stroke="#C4C6CC" stroke-width="1"/><path d="M6.5 2 H4.5 C3 3.5 2.5 5 2.5 7 C2.5 9 3 10.5 4.5 12 H6.5" stroke="#548AF7" stroke-width="1"/></svg>
<div style="position:absolute;left:552px;top:61px;width:1px;height:16px;background:#393B40;"></div>
<svg style="position:absolute;left:557px;top:63px;" width="12" height="12" viewBox="0 0 14 14" fill="none"><path d="M10 3 V11 L4 7 Z" stroke="#C4C6CC" stroke-width="1" stroke-linejoin="round"/></svg>
<svg style="position:absolute;left:574px;top:63px;" width="12" height="12" viewBox="0 0 14 14" fill="none"><circle cx="7" cy="7" r="4" stroke="#C4C6CC" stroke-width="1"/></svg>
<svg style="position:absolute;left:592px;top:63px;" width="12" height="12" viewBox="0 0 14 14" fill="none"><rect x="3.8" y="3.8" width="6.4" height="6.4" rx="0.8" stroke="#C4C6CC" stroke-width="1"/></svg>
<div style="position:absolute;left:610px;top:61px;width:1px;height:16px;background:#393B40;"></div>
<svg style="position:absolute;left:616px;top:63px;" width="12" height="12" viewBox="0 0 14 14" fill="none"><path d="M6 1.5 H3 C2.4 1.5 2 1.9 2 2.5 V11.5 C2 12.1 2.4 12.5 3 12.5 H6" stroke="#C4C6CC" stroke-width="1"/><path d="M4.5 1.5 V3.5" stroke="#C4C6CC" stroke-width="1"/><circle cx="9.5" cy="9.5" r="2.5" stroke="#C4C6CC" stroke-width="1"/><circle cx="9.5" cy="9.5" r="0.8" fill="#CED0D6"/></svg>
<svg style="position:absolute;left:634px;top:63px;" width="12" height="12" viewBox="0 0 14 14" fill="none"><rect x="1" y="2" width="10" height="6.5" rx="0.8" stroke="#C4C6CC" stroke-width="1"/><path d="M3 3.5 H5" stroke="#C4C6CC" stroke-width="1"/><rect x="8.5" y="7.5" width="4.5" height="5" rx="0.8" stroke="#C4C6CC" stroke-width="1"/></svg>
<div style="position:absolute;left:652px;top:61px;width:1px;height:16px;background:#393B40;"></div>
<svg style="position:absolute;left:656px;top:63px;" width="12" height="12" viewBox="0 0 14 14" fill="none"><path d="M1.5 4.5 C1.5 3.9 1.9 3.5 2.5 3.5 H4.5 L5.5 2 H8.5 L9.5 3.5 H11.5 C12.1 3.5 12.5 3.9 12.5 4.5 V11 C12.5 11.6 12.1 12 11.5 12 H2.5 C1.9 12 1.5 11.6 1.5 11 Z" stroke="#C4C6CC" stroke-width="1"/><circle cx="7" cy="7.7" r="2.3" stroke="#C4C6CC" stroke-width="1"/></svg>
<svg style="position:absolute;left:674px;top:63px;" width="12" height="12" viewBox="0 0 14 14" fill="none"><rect x="1" y="3.5" width="9" height="7.5" rx="1" stroke="#C4C6CC" stroke-width="1"/><path d="M10 6 L13 4.5 V10 L10 8.5" stroke="#C4C6CC" stroke-width="1"/></svg>
<div style="position:absolute;left:692px;top:61px;width:1px;height:16px;background:#393B40;"></div>
<svg style="position:absolute;left:697px;top:63px;" width="12" height="12" viewBox="0 0 14 14" fill="none"><path d="M7 1.5 V9 M4 4.5 L7 1.5 L10 4.5 M1.5 9 V12.5 H12.5 V9" stroke="#C4C6CC" stroke-width="1"/></svg>
<svg style="position:absolute;left:715px;top:63px;" width="12" height="12" viewBox="0 0 14 14" fill="none"><path d="M7 1.5 V9 M4 6 L7 9 L10 6 M1.5 9 V12.5 H12.5 V9" stroke="#C4C6CC" stroke-width="1"/></svg>
<div style="position:absolute;left:733px;top:61px;width:1px;height:16px;background:#393B40;"></div>
<svg style="position:absolute;left:738px;top:63px;" width="12" height="12" viewBox="0 0 14 14" fill="none"><path d="M3.5 4 A5 5 0 1 1 2.5 8" stroke="#C4C6CC" stroke-width="1"/><path d="M1.5 1.5 V4.8 H4.8" stroke="#C4C6CC" stroke-width="1"/><path d="M6.5 5 H8.5 V9" stroke="#C4C6CC" stroke-width="1"/></svg>
<svg style="position:absolute;left:761px;top:63px;" width="3" height="12" viewBox="0 0 3 12" fill="none"><circle cx="1.5" cy="1.5" r="0.9" fill="#CED0D6"/><circle cx="1.5" cy="6" r="0.9" fill="#CED0D6"/><circle cx="1.5" cy="10.5" r="0.9" fill="#CED0D6"/></svg>
<svg style="position:absolute;left:952px;top:63px;" width="12" height="12" viewBox="0 0 14 14" fill="none"><rect x="1.5" y="1.5" width="8" height="7" rx="0.5" stroke="#C4C6CC" stroke-width="1"/><path d="M3.5 3.5 V11 H6" stroke="#C4C6CC" stroke-width="1"/><circle cx="9.5" cy="9.5" r="2.3" stroke="#C4C6CC" stroke-width="1"/><path d="M11.2 11.2 L13 13" stroke="#C4C6CC" stroke-width="1"/></svg>
<div style="position:absolute;left:942px;top:492.6px;width:18.5px;height:84px;background:#2B2D30;border:1px solid #313337;border-radius:3px;"></div>
<svg style="position:absolute;left:945.5px;top:498.6px;" width="10" height="10" viewBox="0 0 10 10" fill="none"><path d="M5 0.5 V9.5 M0.5 5 H9.5" stroke="#CED0D6" stroke-width="1"/></svg>
<div style="position:absolute;left:946.5px;top:521.5px;width:8px;height:1px;background:#6F737A;"></div>
<div style="position:absolute;left:945.5px;top:535.80px;height:8.40px;line-height:8.40px;font-size:7px;color:#DFE1E5;font-weight:bold;font-family:'Liberation Sans', sans-serif;white-space:pre;">1:1</div>
<svg style="position:absolute;left:946px;top:554px;" width="9" height="9" viewBox="0 0 9 9" fill="none"><rect x="0.5" y="0.5" width="8" height="8" rx="1" stroke="#5A5D63" stroke-width="1"/><path d="M2.5 6.5 L6.5 2.5 M4 2.5 H6.5 V5" stroke="#5A5D63" stroke-width="0.8"/></svg>
<div style="position:absolute;left:597.5px;top:81.2px;width:225.5px;height:501.09999999999997px;background:#FFFFFF;"></div>
<div style="position:absolute;left:606.6px;top:83.26px;height:9.48px;line-height:9.48px;font-size:7.9px;color:#1F1F22;font-weight:normal;font-family:'Liberation Sans', sans-serif;white-space:pre;-webkit-text-stroke:0.12px #1F1F22;">10:47</div>
<svg style="position:absolute;left:630.5px;top:84.5px;" width="8" height="8" viewBox="0 0 8 8" fill="none"><path d="M4 0.6 L7.2 1.8 V4 C7.2 6 5.8 7 4 7.6 C2.2 7 0.8 6 0.8 4 V1.8 Z" stroke="#1D1B20" stroke-width="0.9"/><path d="M1.2 1.2 L6.8 7" stroke="#1D1B20" stroke-width="0.9"/></svg>
<svg style="position:absolute;left:767px;top:84px;" width="11" height="8" viewBox="0 0 11 8" fill="none"><rect x="0.3" y="5.5" width="1.8" height="2.5" fill="#111"/><rect x="3" y="4" width="1.8" height="4" fill="#111"/><rect x="5.7" y="2.2" width="1.8" height="5.8" fill="#111"/><rect x="8.4" y="0.3" width="1.8" height="7.7" fill="#111"/></svg>
<svg style="position:absolute;left:780.5px;top:84px;" width="10" height="8" viewBox="0 0 10 8" fill="none"><path d="M0.5 2.8 C3 0.2 7 0.2 9.5 2.8" stroke="#111" stroke-width="1.2"/><path d="M2.2 4.6 C3.8 3 6.2 3 7.8 4.6" stroke="#111" stroke-width="1.2"/><circle cx="5" cy="6.8" r="1" fill="#111"/></svg>
<svg style="position:absolute;left:793px;top:84.5px;" width="16" height="7" viewBox="0 0 16 7" fill="none"><rect x="0" y="0" width="14" height="7" rx="3.3" fill="#111"/><rect x="14.5" y="2.3" width="1.2" height="2.4" rx="0.5" fill="#555"/></svg>
<svg style="position:absolute;left:608px;top:106.5px;" width="11" height="8" viewBox="0 0 11 8" fill="none"><path d="M0 1 H10.5 M0 4 H10.5 M0 7 H10.5" stroke="#1D1B20" stroke-width="1.2"/></svg>
<svg style="position:absolute;left:682px;top:106px;" width="22" height="8" viewBox="0 0 22 8" fill="none"><circle cx="4.2" cy="4" r="3.5" fill="#E2506F"/><path d="M1 5 C2.5 3 5 3.8 7.6 2.6" stroke="#3E63D8" stroke-width="1.4"/><text x="8.8" y="5.2" font-size="3.4" fill="#8A96C8" font-family="Liberation Sans">Stylish</text></svg>
<div style="position:absolute;left:706.8px;top:104.26px;height:12.08px;line-height:12.08px;font-size:10.07px;color:#4A9AEC;font-weight:bold;font-family:'Liberation Sans', sans-serif;white-space:pre;">Stylish</div>
<svg style="position:absolute;left:794.8px;top:98.9px;" width="22" height="22" viewBox="0 0 22 22" fill="none"><defs><clipPath id="av"><circle cx="11" cy="11" r="10.9"/></clipPath></defs><circle cx="11" cy="11" r="10.9" fill="#D96263"/><g clip-path="url(#av)"><path d="M5 22 C5 15 5.2 10 6 7 C7 4 8.8 3 11 3 C13.2 3 15 4 16 7 C16.8 10 17 15 17 22 Z" fill="#121018"/><path d="M8.2 10 C8.2 8.2 9.5 7.6 11 7.6 C12.5 7.6 13.8 8.2 13.8 10 V12.5 C13.8 14.5 12.5 15.8 11 15.8 C9.5 15.8 8.2 14.5 8.2 12.5 Z" fill="#F0B49C"/><path d="M7.6 9.8 C7.8 6.5 9 5.5 11 5.5 C13 5.5 14.2 6.5 14.4 9.8 C12.5 8.9 9.5 8.9 7.6 9.8 Z" fill="#121018"/><path d="M2 24 C2.5 19 6 17.2 11 17.2 C16 17.2 19.5 19 20 24 Z" fill="#262443"/><rect x="10" y="15" width="2" height="2.5" fill="#E8A58A"/></g></svg>
<div style="position:absolute;left:606.8px;top:135.72px;height:13.75px;line-height:13.75px;font-size:11.46px;color:#1D1B20;font-weight:bold;font-family:'Liberation Sans', sans-serif;white-space:pre;">All Featured</div>
<div style="position:absolute;left:738px;top:136px;width:31px;height:15px;background:#FFFFFF;border-radius:3px;box-shadow:0 2.5px 3px -1px rgba(0,0,0,0.05);"></div>
<div style="position:absolute;left:777px;top:136px;width:37px;height:15px;background:#FFFFFF;border-radius:3px;box-shadow:0 2.5px 3px -1px rgba(0,0,0,0.05);"></div>
<svg style="position:absolute;left:741px;top:140px;" width="8" height="6" viewBox="0 0 8 6" fill="none"><path d="M0 0.6 H7 M0 2.7 H5 M0 4.8 H2.5" stroke="#444" stroke-width="0.9"/></svg>
<div style="position:absolute;left:751px;top:138.82px;height:8.76px;line-height:8.76px;font-size:7.3px;color:#4E4E4E;font-weight:normal;font-family:'Liberation Sans', sans-serif;white-space:pre;-webkit-text-stroke:0.2px #4E4E4E;">Sort</div>
<svg style="position:absolute;left:782.8px;top:139.5px;" width="7" height="7" viewBox="0 0 7 7" fill="none"><path d="M0.6 0.6 H6.4 L3.5 4 Z M3.5 4 V6.5" stroke="#333" stroke-width="1" stroke-linejoin="round"/></svg>
<div style="position:absolute;left:792.4px;top:138.82px;height:8.76px;line-height:8.76px;font-size:7.3px;color:#4E4E4E;font-weight:normal;font-family:'Liberation Sans', sans-serif;white-space:pre;-webkit-text-stroke:0.2px #4E4E4E;">Filter</div>
<div style="position:absolute;left:606px;top:150px;width:12px;height:60px;overflow:hidden;">
<svg style="position:absolute;left:-8.5px;top:9.2px;" width="19" height="35" viewBox="0 0 19 35" fill="none"><circle cx="1" cy="17.5" r="17.4" fill="#EEEEEE"/></svg>
<div style="position:absolute;left:-1.8px;top:49.14px;height:8.93px;line-height:8.93px;font-size:7.44px;color:#333333;font-weight:normal;font-family:'Liberation Sans', sans-serif;white-space:pre;-webkit-text-stroke:0.18px #333333;">s2</div>
</div>
<svg style="position:absolute;left:625.3px;top:159.2px;" width="35" height="35" viewBox="0 0 35 35" fill="none"><defs><clipPath id="c642"><circle cx="17.5" cy="17.5" r="17.4"/></clipPath></defs><g clip-path="url(#c642)"><rect width="35" height="35" fill="#ADADAD"/><path d="M0 26 L35 22 V35 H0 Z" fill="#A2A2A2"/><path d="M22 15 L33 12 L34 27 L26 31 Z" fill="#8E8E90"/><path d="M6 13 C6 8 10 6 14 6.5 L23 6 C28 5.5 31 9 31 13 L30.5 19 C30 24 27.5 28 25 27 C23 26 22.5 22 20 21.5 L14 21.5 C11 21.5 10 25.5 7.5 26 C5 26.5 4.5 23 4.8 19 Z" fill="#DADADF"/><path d="M6 13 C6 8 10 6 14 6.5 L16.5 6.5 C19.5 11 19 17 15.5 21.5 L14 21.5 C11 21.5 10 25.5 7.5 26 C5 26.5 4.5 23 4.8 19 Z" fill="#EE7B25"/><path d="M9 10 C11 9 13 11 12 13 C10 14 8 12 9 10 Z" fill="#B84E1A"/><path d="M7 20 C9 19 12 20 13 22 L9.5 24.5 Z" fill="#7A3A20" opacity="0.7"/><path d="M19 9 C22 8 25 9 26 11 C24 13 21 13 19 12 Z" fill="#F4F4F6"/><path d="M24 17 C26 16 28 18 27 20 L26 26 L24 25 Z" fill="#C8824E" opacity="0.6"/></g></svg>
<div style="position:absolute;left:624.3px;top:199.14px;height:8.93px;line-height:8.93px;font-size:7.44px;color:#333333;font-weight:normal;font-family:'Liberation Sans', sans-serif;white-space:pre;width:37px;text-align:center;-webkit-text-stroke:0.18px #333333;">Electronics</div>
<svg style="position:absolute;left:669.9px;top:159.2px;" width="35" height="35" viewBox="0 0 35 35" fill="none"><defs><clipPath id="c687"><circle cx="17.5" cy="17.5" r="17.4"/></clipPath></defs><g clip-path="url(#c687)"><rect width="35" height="35" fill="#A9A9A9"/><rect y="0" width="35" height="12" fill="#B2B2B2"/><rect y="24" width="35" height="11" fill="#9E9E9E"/><path d="M3 15.5 H33 V24.5 H3 Z" fill="#5A5A5A"/><rect x="3.5" y="16.5" width="8" height="4" fill="#151515"/><rect x="12" y="16.5" width="10" height="4" fill="#7A7A7A"/><rect x="22.5" y="16" width="10" height="5" fill="#2E2E2E"/><rect x="3" y="21" width="30" height="2" fill="#3A3A3A"/><rect x="3" y="23" width="30" height="1.5" fill="#6E6E6E"/></g></svg>
<div style="position:absolute;left:671.4px;top:199.14px;height:8.93px;line-height:8.93px;font-size:7.44px;color:#333333;font-weight:normal;font-family:'Liberation Sans', sans-serif;white-space:pre;width:32px;text-align:center;-webkit-text-stroke:0.18px #333333;">Furniture</div>
<svg style="position:absolute;left:713.9px;top:159.2px;" width="35" height="35" viewBox="0 0 35 35" fill="none"><defs><clipPath id="c731"><circle cx="17.5" cy="17.5" r="17.4"/></clipPath></defs><g clip-path="url(#c731)"><rect width="35" height="35" fill="#A7ABB3"/><path d="M6 0 H30 L33 6 C28 4 20 3 12 4 L4 6 Z" fill="#B8AEC8"/><path d="M12 0 L16 3 L19 0 Z" fill="#E9C64A"/><path d="M20 0 L23 4 L26 0 Z" fill="#5EC98A"/><path d="M26 1 L30 5 L33 3 Z" fill="#E26AC0"/><path d="M8 6 C14 7 24 13 32 17 C33 19 31 21 28 20.5 C20 19 12 15 7 11 Z" fill="#E6E9EE"/><path d="M7 9 C11 8 14 10 13 12 L8 12 Z" fill="#2A2A30"/><path d="M14 6.5 C18 7 22 10 26 12" stroke="#7C8088" stroke-width="0.8"/><path d="M10 14 C16 16 24 21 30 24 C30 26 28 27 25 26 C18 24 12 20 8 17 Z" fill="#CDD3DA"/><path d="M0 20 C7 20 14 24 21 28 C22 29.5 20 31 17 30.5 C10 29 4 26.5 0 24.5 Z" fill="#E8894A"/><path d="M0 24 C7 24 13 27.5 20 30.5 L18 34 C12 33 5 30 0 28 Z" fill="#7E55C0"/><path d="M2 25 C8 26 14 29 19 31" stroke="#F05FA8" stroke-width="1.2"/><path d="M21 29 C24 28 28 26 31 24" stroke="#58D8E8" stroke-width="1"/></g></svg>
<div style="position:absolute;left:720.4px;top:199.14px;height:8.93px;line-height:8.93px;font-size:7.44px;color:#333333;font-weight:normal;font-family:'Liberation Sans', sans-serif;white-space:pre;width:22px;text-align:center;-webkit-text-stroke:0.18px #333333;">Shoes</div>
<svg style="position:absolute;left:764.3px;top:159.2px;" width="35" height="35" viewBox="0 0 35 35" fill="none"><defs><clipPath id="c781"><circle cx="17.5" cy="17.5" r="17.4"/></clipPath></defs><g clip-path="url(#c781)"><rect width="35" height="35" fill="#B3B3B3"/><rect y="26" width="35" height="9" fill="#C9C9C9"/><circle cx="7.8" cy="24.8" r="5.6" stroke="#1E1E1E" stroke-width="1.5" fill="#8C7F70"/><circle cx="7.8" cy="24.8" r="2.5" fill="#D0862E" opacity="0.8"/><circle cx="28.6" cy="23.6" r="4.5" stroke="#1E1E1E" stroke-width="1.4" fill="#D88530"/><path d="M7.8 24.8 L13.5 9.5 M10.5 7.6 H19.5 M13.5 9.5 L16 19 L21 23.6 H28.6 L25.6 14.2 M23 14.2 H28 M16 19 L25.6 14.2" stroke="#1E1E1E" stroke-width="1.5"/><path d="M13 14 L17 21 L19 19 L15 12 Z" fill="#1A1A1A"/></g></svg>
<div style="position:absolute;left:757.8px;top:199.14px;height:8.93px;line-height:8.93px;font-size:7.44px;color:#333333;font-weight:normal;font-family:'Liberation Sans', sans-serif;white-space:pre;width:48px;text-align:center;-webkit-text-stroke:0.18px #333333;">Miscellaneous</div>
<div style="position:absolute;left:607px;top:230.14px;height:12.53px;line-height:12.53px;font-size:10.44px;color:#1D1B20;font-weight:bold;font-family:'Liberation Sans', sans-serif;white-space:pre;">Popular Products</div>
<div style="position:absolute;left:680.5px;top:576px;width:60px;height:2px;background:#666666;border-radius:1px;"></div>
<svg style="position:absolute;left:980px;top:35px;" width="14" height="14" viewBox="0 0 14 14" fill="none"><path d="M2.5 10.5 C3.5 9.5 3.5 8.5 3.5 6 C3.5 3.5 5 1.8 7 1.8 C9 1.8 10.5 3.5 10.5 6 C10.5 8.5 10.5 9.5 11.5 10.5 Z" stroke="#CED0D6" stroke-width="1" stroke-linejoin="round"/><path d="M5.8 12.3 H8.2" stroke="#CED0D6" stroke-width="1"/></svg>
<svg style="position:absolute;left:979.5px;top:62.5px;" width="14" height="14" viewBox="0 0 14 14" fill="none"><path d="M6 12.5 H2.5 C1.9 12.5 1.5 12.1 1.5 11.5 V2.5 C1.5 1.9 1.9 1.5 2.5 1.5 H7.5 C8.1 1.5 8.5 1.9 8.5 2.5 V5.5" stroke="#CED0D6" stroke-width="1"/><path d="M4.5 1.5 V3" stroke="#CED0D6" stroke-width="1"/><path d="M6.5 12.5 C6.5 9.5 8 8 10 8 C12 8 13.5 9.5 13.5 12.5 Z" stroke="#CED0D6" stroke-width="1"/></svg>
<div style="position:absolute;left:976.5px;top:87.7px;width:20.5px;height:20.5px;background:#3574F0;border-radius:4px;"></div>
<svg style="position:absolute;left:979.5px;top:90.5px;" width="15" height="15" viewBox="0 0 15 15" fill="none"><path d="M4.5 12.5 H2.5 C1.9 12.5 1.5 12.1 1.5 11.5 V3 C1.5 2.4 1.9 2 2.5 2 H5.5" stroke="#FFFFFF" stroke-width="1"/><path d="M3.8 4.2 H5 M3.8 6 H5" stroke="#FFFFFF" stroke-width="0.9"/><rect x="5.5" y="7" width="7.5" height="4.5" rx="0.8" stroke="#FFFFFF" stroke-width="1"/><path d="M6 13 H12.5" stroke="#FFFFFF" stroke-width="1"/><circle cx="12" cy="3" r="2.2" fill="#5FD15A"/></svg>
<svg style="position:absolute;left:980px;top:119.5px;" width="14" height="14" viewBox="0 0 14 14" fill="none"><path d="M7 0.8 C7.6 4.8 9.2 6.4 13.2 7 C9.2 7.6 7.6 9.2 7 13.2 C6.4 9.2 4.8 7.6 0.8 7 C4.8 6.4 6.4 4.8 7 0.8 Z" fill="#DFE1E5"/></svg>
<svg style="position:absolute;left:980px;top:147.6px;" width="15" height="15" viewBox="0 0 15 15" fill="none"><path d="M4 5 H10 C11.4 5 12.5 6.1 12.5 7.5 C12.5 8.9 11.4 10 10 10 H4 C2.6 10 1.5 8.9 1.5 7.5 C1.5 6.1 2.6 5 4 5 Z" stroke="#CED0D6" stroke-width="1"/><path d="M4.5 7.5 H9.5" stroke="#CED0D6" stroke-width="1"/><path d="M11 11 L13 13 M13 11 L11 13" stroke="#6C7CF0" stroke-width="0.9"/></svg>
<svg style="position:absolute;left:980px;top:174.4px;" width="15" height="15" viewBox="0 0 15 15" fill="none"><circle cx="4" cy="4" r="2.3" stroke="#CED0D6" stroke-width="1"/><path d="M2 12.5 L12.5 2 M9 2.5 L12.5 6 M5.5 9 L9 12.5" stroke="#CED0D6" stroke-width="1"/><path d="M11 11 L13 13 M13 11 L11 13" stroke="#6C7CF0" stroke-width="0.9"/></svg>
<svg style="position:absolute;left:980px;top:202.5px;" width="15" height="15" viewBox="0 0 15 15" fill="none"><path d="M1.5 3 C1.5 2.4 1.9 2 2.5 2 H5 L7 3.5 H11.5 C12.1 3.5 12.5 3.9 12.5 4.5 V11.5 C12.5 12.1 12.1 12.5 11.5 12.5 H2.5 C1.9 12.5 1.5 12.1 1.5 11.5 Z" stroke="#CED0D6" stroke-width="1"/><path d="M4 9 L6 7 L8 9" stroke="#CED0D6" stroke-width="1"/><path d="M11 11 L13 13 M13 11 L11 13" stroke="#6C7CF0" stroke-width="0.9"/></svg>
<svg style="position:absolute;left:980px;top:230.5px;" width="15" height="15" viewBox="0 0 15 15" fill="none"><path d="M2 12.5 L2.5 9.5 L9.5 2.5 L12 5 L5 12 Z M8 4 L10.5 6.5" stroke="#CED0D6" stroke-width="1" stroke-linejoin="round"/><path d="M11 11 L13 13 M13 11 L11 13" stroke="#6C7CF0" stroke-width="0.9"/></svg>
<svg style="position:absolute;left:980px;top:257.3px;" width="15" height="15" viewBox="0 0 15 15" fill="none"><path d="M1.5 4 V1.5 H4 M10 1.5 H12.5 V4 M12.5 10 V12.5 H10 M4 12.5 H1.5 V10" stroke="#CED0D6" stroke-width="1"/><circle cx="6.5" cy="6.5" r="2.2" stroke="#CED0D6" stroke-width="1"/><path d="M8 8 L10 10" stroke="#CED0D6" stroke-width="1"/><path d="M11 11 L13 13 M13 11 L11 13" stroke="#6C7CF0" stroke-width="0.9"/></svg>
<div style="position:absolute;left:28px;top:583px;width:943px;height:63.5px;background:#2B2D30;"></div>
<div style="position:absolute;left:28px;top:582.6px;width:943px;height:1px;background:#232427;"></div>
<div style="position:absolute;left:37px;top:592.44px;height:11.52px;line-height:11.52px;font-size:9.6px;color:#DFE1E5;font-weight:normal;font-family:'Liberation Sans', sans-serif;white-space:pre;-webkit-text-stroke:0.25px #DFE1E5;">Run</div>
<svg style="position:absolute;left:74.6px;top:592.3px;" width="10" height="11" viewBox="0 0 10 11" fill="none"><path d="M6 0.3 L0.3 6 L2 7.7 L9.4 0.3 Z" fill="#47C5FB"/><path d="M6 5.6 L3 8.6 L5.7 11 H9 L6.3 8.3 L9.1 5.6 Z" fill="#1A8FDD"/></svg>
<div style="position:absolute;left:87.6px;top:593.33px;height:11.15px;line-height:11.15px;font-size:9.29px;color:#DFE1E5;font-weight:normal;font-family:'Liberation Sans', sans-serif;white-space:pre;">main.dart (Medium Phone API 36.1)</div>
<svg style="position:absolute;left:243px;top:595.5px;" width="7" height="7" viewBox="0 0 7 7" fill="none"><path d="M0.7 0.7 L6.3 6.3 M6.3 0.7 L0.7 6.3" stroke="#6F737A" stroke-width="0.9"/></svg>
<div style="position:absolute;left:65.5px;top:609.8px;width:191px;height:2px;background:#6F737A;border-radius:1px;"></div>
<svg style="position:absolute;left:38.5px;top:618.5px;" width="8" height="11" viewBox="0 0 8 11" fill="none"><path d="M5.2 0.3 L0.8 6 H3.6 L2.6 10.7 L7.2 4.8 H4.4 Z" fill="#F2B62F"/></svg>
<svg style="position:absolute;left:55px;top:617.5px;" width="12" height="12" viewBox="0 0 12 12" fill="none"><path d="M2.5 3 H8 C9.4 3 10.3 4 10.3 5.3 V6.5 M9.5 9 H4 C2.6 9 1.7 8 1.7 6.7 V5.5" stroke="#4FB84F" stroke-width="1.3"/><path d="M3.8 1.2 L2.2 3 L3.8 4.8 M8.2 7.2 L9.8 9 L8.2 10.8" stroke="#4FB84F" stroke-width="1.1"/><path d="M9 6.5 L7.2 9.6 H8.7 L8 12 L10.6 8.6 H9.1 L10 6.5 Z" fill="#F2B62F"/></svg>
<div style="position:absolute;left:72px;top:617px;width:1px;height:15px;background:#393B40;"></div>
<svg style="position:absolute;left:78px;top:619px;" width="11" height="11" viewBox="0 0 11 11" fill="none"><path d="M5.5 0.5 C8.5 0.5 10.5 2.5 10.5 5.5 C10.5 8.5 8.5 10.5 5.5 10.5 C2.5 10.5 0.5 8.5 0.5 5.5 C0.5 2.5 2.5 0.5 5.5 0.5 Z" fill="#6FA8F0"/><path d="M1.8 2.2 L8.8 9.2" stroke="#2F62C8" stroke-width="1.3"/></svg>
<svg style="position:absolute;left:99.5px;top:618.5px;" width="4" height="12" viewBox="0 0 4 12" fill="none"><circle cx="2" cy="1.8" r="0.9" fill="#CED0D6"/><circle cx="2" cy="6" r="0.9" fill="#CED0D6"/><circle cx="2" cy="10.2" r="0.9" fill="#CED0D6"/></svg>
<div style="position:absolute;left:128px;top:618.96px;height:11.28px;line-height:11.28px;font-size:9.4px;color:#DFE1E5;font-weight:normal;font-family:'Liberation Sans', sans-serif;white-space:pre;">Console</div>
<svg style="position:absolute;left:958.5px;top:618px;" width="12" height="12" viewBox="0 0 12 12" fill="none"><rect x="0.6" y="0.6" width="10.8" height="10.8" rx="1.2" stroke="#CED0D6" stroke-width="1"/><path d="M4.5 0.6 V11.4 M4.5 6 H11.4" stroke="#CED0D6" stroke-width="1"/></svg>
<svg style="position:absolute;left:39px;top:634px;" width="5" height="5" viewBox="0 0 5 5" fill="none"><path d="M0.5 4.5 L3.5 1.5" stroke="#7A7E85" stroke-width="0.9"/></svg>
<div style="position:absolute;left:54px;top:636px;width:919px;height:9.6px;background:#1E1F22;border-radius:0 3px 3px 0;"></div>
<div style="position:absolute;left:28px;top:646.5px;width:972px;height:20.5px;background:#2B2D30;"></div>
<div style="position:absolute;left:10px;top:653.5px;width:5.5px;height:6px;background:transparent;border:1.2px solid #5A7BEA;border-radius:1px;"></div>
<div style="position:absolute;left:18.6px;top:650.76px;height:11.28px;line-height:11.28px;font-size:9.4px;color:#9FA2AA;font-weight:normal;font-family:'Liberation Sans', sans-serif;white-space:pre;">untitled</div>
<svg style="position:absolute;left:56.5px;top:653px;" width="5" height="7" viewBox="0 0 5 7" fill="none"><path d="M0.8 0.8 L3.6 3.5 L0.8 6.2" stroke="#9FA2AA" stroke-width="1"/></svg>
<div style="position:absolute;left:66.5px;top:650.76px;height:11.28px;line-height:11.28px;font-size:9.4px;color:#9FA2AA;font-weight:normal;font-family:'Liberation Sans', sans-serif;white-space:pre;">lib</div>
<svg style="position:absolute;left:84.5px;top:653px;" width="5" height="7" viewBox="0 0 5 7" fill="none"><path d="M0.8 0.8 L3.6 3.5 L0.8 6.2" stroke="#9FA2AA" stroke-width="1"/></svg>
<div style="position:absolute;left:94px;top:650.76px;height:11.28px;line-height:11.28px;font-size:9.4px;color:#9FA2AA;font-weight:normal;font-family:'Liberation Sans', sans-serif;white-space:pre;">features</div>
<svg style="position:absolute;left:135.5px;top:653px;" width="5" height="7" viewBox="0 0 5 7" fill="none"><path d="M0.8 0.8 L3.6 3.5 L0.8 6.2" stroke="#9FA2AA" stroke-width="1"/></svg>
<div style="position:absolute;left:145.5px;top:650.76px;height:11.28px;line-height:11.28px;font-size:9.4px;color:#9FA2AA;font-weight:normal;font-family:'Liberation Sans', sans-serif;white-space:pre;">screens</div>
<svg style="position:absolute;left:185.5px;top:653px;" width="5" height="7" viewBox="0 0 5 7" fill="none"><path d="M0.8 0.8 L3.6 3.5 L0.8 6.2" stroke="#9FA2AA" stroke-width="1"/></svg>
<svg style="position:absolute;left:195.5px;top:651.4px;" width="10" height="10" viewBox="0 0 10 10" fill="none"><ellipse cx="5" cy="5" rx="4.6" ry="4.9" fill="#3DB4F2"/><path d="M1.2 2.5 C2 1 3.5 0.3 5.2 0.2 L8.2 6.5 Z" fill="#1D6FC0"/><path d="M2.2 2 L8.5 8.2" stroke="#A5DDFB" stroke-width="1.1"/></svg>
<div style="position:absolute;left:209px;top:650.74px;height:11.32px;line-height:11.32px;font-size:9.43px;color:#9FA2AA;font-weight:normal;font-family:'Liberation Sans', sans-serif;white-space:pre;">home_screen.dart</div>
<div style="position:absolute;left:803px;top:650.76px;height:11.28px;line-height:11.28px;font-size:9.4px;color:#9FA2AA;font-weight:normal;font-family:'Liberation Sans', sans-serif;white-space:pre;">29:1</div>
<div style="position:absolute;left:831.8px;top:650.76px;height:11.28px;line-height:11.28px;font-size:9.4px;color:#9FA2AA;font-weight:normal;font-family:'Liberation Sans', sans-serif;white-space:pre;">CRLF</div>
<div style="position:absolute;left:864.6px;top:650.76px;height:11.28px;line-height:11.28px;font-size:9.4px;color:#9FA2AA;font-weight:normal;font-family:'Liberation Sans', sans-serif;white-space:pre;">UTF-8</div>
<svg style="position:absolute;left:903px;top:650px;" width="12" height="13" viewBox="0 0 12 13" fill="none"><path d="M2 11.5 L4 6.5 C4.5 4 6.5 2 9 1.5 C11 1.5 11.5 3.5 10.5 5.5 L8.5 9 L4 11 Z" fill="#D6D8DE"/><circle cx="8.5" cy="4" r="1.1" fill="#2B2D30"/><path d="M1 12.5 L2.8 10.8" stroke="#D6D8DE" stroke-width="1"/></svg>
<div style="position:absolute;left:928px;top:650.76px;height:11.28px;line-height:11.28px;font-size:9.4px;color:#9FA2AA;font-weight:normal;font-family:'Liberation Sans', sans-serif;white-space:pre;">2 spaces</div>
<svg style="position:absolute;left:978.5px;top:651.5px;" width="11" height="10" viewBox="0 0 11 10" fill="none"><rect x="0.8" y="4.3" width="6.4" height="5" rx="0.8" stroke="#CED0D6" stroke-width="1"/><path d="M5.8 4.3 V3 C5.8 1.8 6.7 0.8 8 0.8 C9.3 0.8 10.2 1.8 10.2 3 V3.8" stroke="#CED0D6" stroke-width="1"/></svg>
</body></html>
